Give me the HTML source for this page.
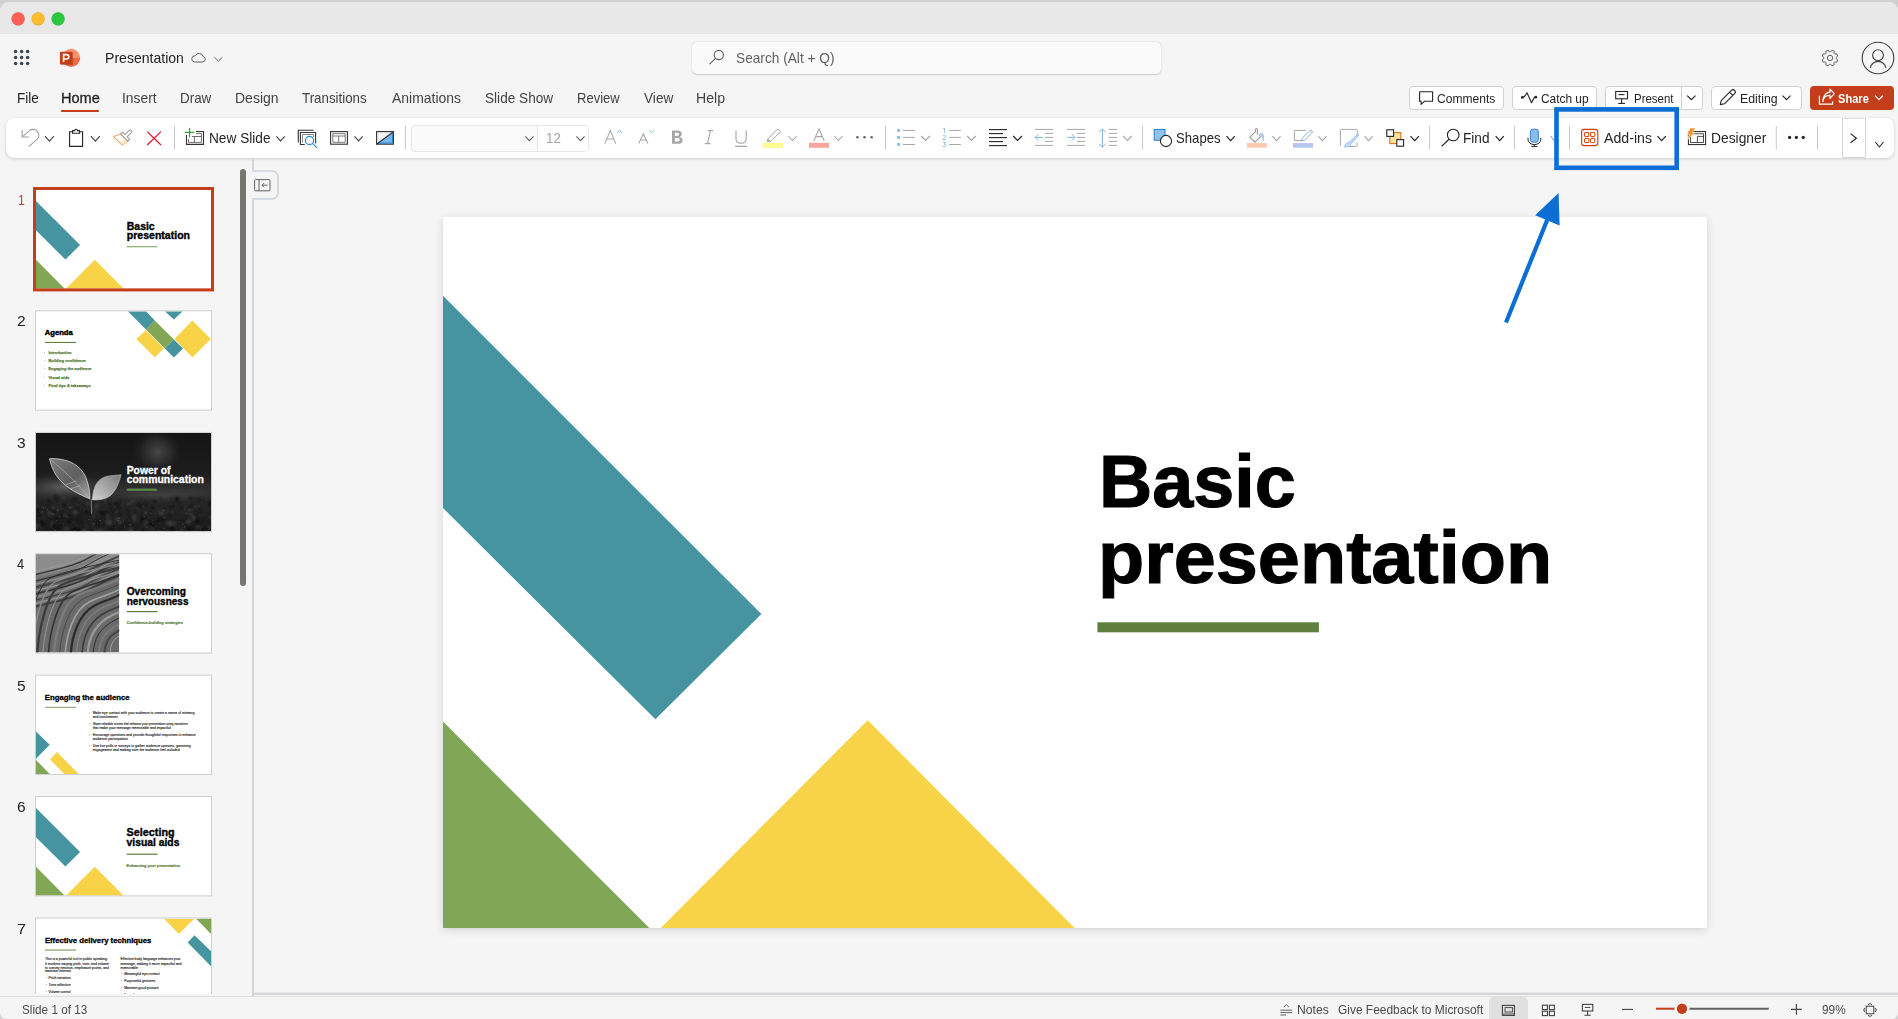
<!DOCTYPE html><html><head><meta charset="utf-8"><title>PowerPoint</title><style>

html,body{margin:0;padding:0}
body{width:1898px;height:1019px;overflow:hidden;background:#d0d0d0;position:relative;font-family:"Liberation Sans",sans-serif}
.a{position:absolute;box-sizing:border-box}
.t{position:absolute;white-space:nowrap;line-height:1;transform-origin:0 0;font-family:"Liberation Sans",sans-serif;z-index:5}
svg.ov{position:absolute;left:0;top:0;z-index:3;overflow:visible}

</style></head><body>

<div class="a" style="left:0;top:2px;width:1898px;height:1017px;background:#f5f5f5;border-radius:9px 9px 6px 6px;overflow:hidden"></div>
<div class="a" style="left:0;top:2px;width:1898px;height:32px;background:#e8e8e8;border-radius:9px 9px 0 0"></div>
<div class="a" style="left:692px;top:42px;width:469px;height:32px;background:#fafafa;border-radius:5px;box-shadow:0 0.5px 1.5px rgba(0,0,0,0.18)"></div>
<div class="a" style="left:1409px;top:86px;width:95px;height:24px;background:#fff;border:1px solid #d1d1d1;border-radius:4px"></div>
<div class="a" style="left:1512px;top:86px;width:85px;height:24px;background:#fff;border:1px solid #d1d1d1;border-radius:4px"></div>
<div class="a" style="left:1605px;top:86px;width:98px;height:24px;background:#fff;border:1px solid #d1d1d1;border-radius:4px"></div>
<div class="a" style="left:1681px;top:86px;width:1px;height:24px;background:#d1d1d1"></div>
<div class="a" style="left:1711px;top:86px;width:91px;height:24px;background:#fff;border:1px solid #d1d1d1;border-radius:4px"></div>
<div class="a" style="left:1810px;top:86px;width:84px;height:24px;background:#c43e1c;border-radius:4px"></div>
<div class="a" style="left:6px;top:118px;width:1888px;height:40px;background:#fff;border-radius:8px;box-shadow:0 1px 3px rgba(0,0,0,0.17),0 0 1px rgba(0,0,0,0.06)"></div>
<div class="a" style="left:410.5px;top:124.5px;width:178px;height:27px;background:#fafafa;border:1px solid #e6e6e6;border-radius:4px"></div>
<div class="a" style="left:537px;top:125.5px;width:51px;height:25px;background:#fff;border-left:1px solid #e6e6e6;border-radius:0 3px 3px 0"></div>
<div class="a" style="left:1842px;top:118px;width:24px;height:40px;background:#fff;border:1px solid #d6d6d6;border-top:1px solid #e0e0e0"></div>
<div class="a" style="left:443px;top:217px;width:1264px;height:711px;background:#fff;box-shadow:0 2px 8px rgba(0,0,0,0.14)"></div>
<div class="a" style="left:252px;top:158px;width:2px;height:838px;background:#d2d5d9"></div>
<div class="a" style="left:252px;top:170px;width:27px;height:30px;background:#f5f5f5;border:2px solid #d6d9de;border-left:none;border-radius:0 7px 7px 0"></div>
<div class="a" style="left:240px;top:169px;width:6px;height:417px;background:#777673;border-radius:3px"></div>
<div class="a" style="left:254px;top:992px;width:1644px;height:1px;background:#ebe9e6"></div><div class="a" style="left:252px;top:993px;width:1646px;height:2px;background:#d2d5d9"></div>
<div class="a" style="left:0;top:996px;width:1898px;height:1.2px;background:#e0dedb"></div>
<div class="a" style="left:1488.5px;top:997px;width:39.5px;height:26px;background:#e0e0e0;border-radius:5px"></div>

<svg class="ov" width="1898" height="1019" viewBox="0 0 1898 1019">
<g transform="translate(443,217)"><polygon points="0.00,78.80 318.40,397.10 212.40,502.30 0.00,291.00" fill="#4594a0"/>
<polygon points="0.00,504.60 206.30,711.00 0.00,711.00" fill="#80a656"/>
<polygon points="424.70,503.20 631.60,711.00 217.80,711.00" fill="#f8d347"/><rect x="654.4" y="405.3" width="221.5" height="10" fill="#5f7f3f"/></g>
<defs><clipPath id="tclip"><rect x="0" y="0" width="175" height="98.4"/></clipPath><clipPath id="t7clip"><rect x="0" y="0" width="175" height="75.3"/></clipPath><clipPath id="woodclip"><rect x="0" y="0" width="83.2" height="98.4"/></clipPath><radialGradient id="glow" cx="0.5" cy="0.5" r="0.5"><stop offset="0" stop-color="#484848"/><stop offset="0.5" stop-color="#333" stop-opacity="0.7"/><stop offset="1" stop-color="#1c1c1c" stop-opacity="0"/></radialGradient><linearGradient id="photo3" x1="0" y1="0" x2="0" y2="1"><stop offset="0" stop-color="#141414"/><stop offset="0.4" stop-color="#1c1c1c"/><stop offset="0.58" stop-color="#303030"/><stop offset="0.7" stop-color="#262626"/><stop offset="1" stop-color="#1e1e1e"/></linearGradient><radialGradient id="mist" cx="0.5" cy="0.5" r="0.5"><stop offset="0" stop-color="#707070" stop-opacity="0.75"/><stop offset="1" stop-color="#3a3a3a" stop-opacity="0"/></radialGradient><linearGradient id="leafA" x1="0" y1="0" x2="1" y2="1"><stop offset="0" stop-color="#7c7c7c"/><stop offset="0.55" stop-color="#5e5e5e"/><stop offset="1" stop-color="#a8a8a8"/></linearGradient><linearGradient id="leafB" x1="0" y1="1" x2="1" y2="0"><stop offset="0" stop-color="#d0d0d0"/><stop offset="0.5" stop-color="#a6a6a6"/><stop offset="1" stop-color="#7a7a7a"/></linearGradient><filter id="blur1" x="-20%" y="-20%" width="140%" height="140%"><feGaussianBlur stdDeviation="0.9"/></filter><filter id="blur2" x="-20%" y="-20%" width="140%" height="140%"><feGaussianBlur stdDeviation="0.55"/></filter><filter id="blur3" x="-50%" y="-50%" width="200%" height="200%"><feGaussianBlur stdDeviation="3"/></filter></defs>
<rect x="36" y="190.0" width="175" height="98.40" fill="#fff"/>
<rect x="36" y="311.3" width="175" height="98.40" fill="#fff"/>
<rect x="36" y="432.9" width="175" height="98.40" fill="#fff"/>
<rect x="36" y="554.2" width="175" height="98.40" fill="#fff"/>
<rect x="36" y="675.6" width="175" height="98.40" fill="#fff"/>
<rect x="36" y="797.0" width="175" height="98.40" fill="#fff"/>
<rect x="36" y="918.5" width="175" height="75.30" fill="#fff"/>
<g transform="translate(36,190.0) scale(0.138449)"><polygon points="0.00,78.80 318.40,397.10 212.40,502.30 0.00,291.00" fill="#4594a0"/>
<polygon points="0.00,504.60 206.30,711.00 0.00,711.00" fill="#80a656"/>
<polygon points="424.70,503.20 631.60,711.00 217.80,711.00" fill="#f8d347"/></g>
<g transform="translate(36,190.0)"><text x="90.8" y="39.7" font-family="Liberation Sans" font-weight="700" font-size="10.6" fill="#000" stroke="#000" stroke-width="0.35" textLength="27.9" lengthAdjust="spacingAndGlyphs">Basic</text><text x="90.8" y="49.4" font-family="Liberation Sans" font-weight="700" font-size="10.6" fill="#000" stroke="#000" stroke-width="0.35" textLength="63.2" lengthAdjust="spacingAndGlyphs">presentation</text><rect x="90.6" y="56.1" width="30.7" height="1.2" fill="#8fa874"/></g>
<g transform="translate(36,311.3)" clip-path="url(#tclip)"><polygon points="100.30,27.70 110.00,19.00 127.80,36.90 118.90,46.30" fill="#f8d347"/><polygon points="156.40,9.10 174.90,27.70 156.40,46.30 138.50,27.70" fill="#f8d347"/><polygon points="91.80,0.00 110.00,0.00 118.80,9.20 110.00,18.20" fill="#4594a0"/><polygon points="128.80,0.00 146.70,0.00 137.90,8.30" fill="#4594a0"/><polygon points="118.80,9.20 137.90,28.10 128.80,37.20 110.00,18.20" fill="#80a656"/><polygon points="137.90,28.10 147.00,37.20 137.90,46.30 128.80,37.20" fill="#4594a0"/><text x="8.8" y="24.0" font-family="Liberation Sans" font-weight="700" font-size="7.2" fill="#000" stroke="#000" stroke-width="0.4" textLength="27.9" lengthAdjust="spacingAndGlyphs">Agenda</text><rect x="9" y="30.6" width="31" height="1.1" fill="#5f7f3f"/><circle cx="8.4" cy="41.2" r="0.45" fill="#5f7f3f"/><text x="12.5" y="42.800000000000004" font-family="Liberation Sans" font-weight="700" font-size="4.4" fill="#5f7f3f" stroke="#5f7f3f" stroke-width="0.25" textLength="23" lengthAdjust="spacingAndGlyphs">Introduction</text><circle cx="8.4" cy="49.3" r="0.45" fill="#5f7f3f"/><text x="12.5" y="50.9" font-family="Liberation Sans" font-weight="700" font-size="4.4" fill="#5f7f3f" stroke="#5f7f3f" stroke-width="0.25" textLength="37.3" lengthAdjust="spacingAndGlyphs">Building confidence</text><circle cx="8.4" cy="57.3" r="0.45" fill="#5f7f3f"/><text x="12.5" y="58.9" font-family="Liberation Sans" font-weight="700" font-size="4.4" fill="#5f7f3f" stroke="#5f7f3f" stroke-width="0.25" textLength="43" lengthAdjust="spacingAndGlyphs">Engaging the audience</text><circle cx="8.4" cy="66.3" r="0.45" fill="#5f7f3f"/><text x="12.5" y="67.89999999999999" font-family="Liberation Sans" font-weight="700" font-size="4.4" fill="#5f7f3f" stroke="#5f7f3f" stroke-width="0.25" textLength="20.8" lengthAdjust="spacingAndGlyphs">Visual aids</text><circle cx="8.4" cy="74.3" r="0.45" fill="#5f7f3f"/><text x="12.5" y="75.89999999999999" font-family="Liberation Sans" font-weight="700" font-size="4.4" fill="#5f7f3f" stroke="#5f7f3f" stroke-width="0.25" textLength="42.1" lengthAdjust="spacingAndGlyphs">Final tips &amp; takeaways</text></g>
<g transform="translate(36,432.9)" clip-path="url(#tclip)"><rect x="0" y="0" width="175" height="98.4" fill="url(#photo3)"/><ellipse cx="121.6" cy="19" rx="26" ry="24" fill="url(#glow)"/><ellipse cx="28" cy="54" rx="48" ry="13" fill="url(#mist)"/><ellipse cx="125" cy="62" rx="75" ry="9" fill="url(#mist)" opacity="0.45"/><g filter="url(#blur1)" opacity="0.9"><circle cx="109.7" cy="90.7" r="2.58" fill="#3e3e3e"/><circle cx="130.9" cy="97.2" r="1.19" fill="#262626"/><circle cx="137.4" cy="73.0" r="0.84" fill="#141414"/><circle cx="17.5" cy="80.9" r="1.29" fill="#303030"/><circle cx="15.5" cy="73.0" r="1.82" fill="#262626"/><circle cx="47.6" cy="97.0" r="2.75" fill="#141414"/><circle cx="134.9" cy="66.6" r="1.45" fill="#262626"/><circle cx="19.9" cy="64.1" r="1.67" fill="#141414"/><circle cx="137.0" cy="98.6" r="1.51" fill="#141414"/><circle cx="49.4" cy="98.6" r="2.32" fill="#1f1f1f"/><circle cx="110.3" cy="70.5" r="2.06" fill="#141414"/><circle cx="171.9" cy="96.2" r="1.74" fill="#1a1a1a"/><circle cx="72.1" cy="97.7" r="1.70" fill="#1a1a1a"/><circle cx="51.5" cy="85.7" r="0.96" fill="#1f1f1f"/><circle cx="125.1" cy="66.4" r="1.11" fill="#1a1a1a"/><circle cx="84.0" cy="75.4" r="1.53" fill="#1f1f1f"/><circle cx="28.9" cy="73.2" r="2.13" fill="#1f1f1f"/><circle cx="61.7" cy="78.6" r="1.73" fill="#262626"/><circle cx="63.3" cy="84.8" r="0.96" fill="#0e0e0e"/><circle cx="125.1" cy="86.5" r="2.71" fill="#0e0e0e"/><circle cx="133.8" cy="97.5" r="3.15" fill="#1a1a1a"/><circle cx="89.8" cy="96.1" r="1.64" fill="#262626"/><circle cx="16.6" cy="90.9" r="2.59" fill="#3e3e3e"/><circle cx="50.6" cy="79.6" r="2.46" fill="#141414"/><circle cx="58.7" cy="86.0" r="2.62" fill="#1a1a1a"/><circle cx="46.9" cy="89.3" r="1.18" fill="#1f1f1f"/><circle cx="54.3" cy="70.4" r="0.83" fill="#141414"/><circle cx="127.5" cy="75.1" r="1.53" fill="#1f1f1f"/><circle cx="5.8" cy="99.5" r="2.33" fill="#262626"/><circle cx="2.8" cy="90.7" r="1.70" fill="#1a1a1a"/><circle cx="79.5" cy="79.2" r="0.95" fill="#1f1f1f"/><circle cx="2.9" cy="81.8" r="2.32" fill="#141414"/><circle cx="174.6" cy="84.3" r="1.17" fill="#3e3e3e"/><circle cx="71.9" cy="70.1" r="1.23" fill="#0e0e0e"/><circle cx="149.9" cy="74.6" r="1.46" fill="#303030"/><circle cx="151.3" cy="99.1" r="2.15" fill="#262626"/><circle cx="121.7" cy="75.4" r="1.22" fill="#262626"/><circle cx="70.1" cy="69.3" r="1.21" fill="#303030"/><circle cx="170.7" cy="86.6" r="1.88" fill="#1a1a1a"/><circle cx="29.6" cy="81.7" r="1.77" fill="#303030"/><circle cx="154.0" cy="77.0" r="2.05" fill="#3e3e3e"/><circle cx="61.4" cy="85.1" r="1.01" fill="#1a1a1a"/><circle cx="62.8" cy="89.4" r="1.55" fill="#262626"/><circle cx="44.9" cy="99.3" r="2.73" fill="#1a1a1a"/><circle cx="114.6" cy="84.9" r="0.96" fill="#303030"/><circle cx="137.0" cy="75.7" r="1.22" fill="#1a1a1a"/><circle cx="144.8" cy="87.3" r="2.46" fill="#1a1a1a"/><circle cx="46.6" cy="76.4" r="2.26" fill="#262626"/><circle cx="60.4" cy="94.3" r="2.87" fill="#1f1f1f"/><circle cx="78.4" cy="77.1" r="1.35" fill="#141414"/><circle cx="92.8" cy="70.0" r="1.86" fill="#3e3e3e"/><circle cx="83.4" cy="88.9" r="2.37" fill="#1f1f1f"/><circle cx="72.4" cy="86.2" r="2.67" fill="#303030"/><circle cx="117.5" cy="79.1" r="1.87" fill="#3e3e3e"/><circle cx="154.0" cy="73.7" r="2.24" fill="#141414"/><circle cx="26.0" cy="79.9" r="1.93" fill="#141414"/><circle cx="134.4" cy="70.5" r="1.71" fill="#262626"/><circle cx="174.3" cy="70.0" r="1.93" fill="#0e0e0e"/><circle cx="54.4" cy="70.5" r="0.99" fill="#0e0e0e"/><circle cx="72.2" cy="76.6" r="1.85" fill="#0e0e0e"/><circle cx="103.8" cy="72.6" r="2.05" fill="#0e0e0e"/><circle cx="60.4" cy="98.3" r="2.99" fill="#3e3e3e"/><circle cx="17.8" cy="93.9" r="1.84" fill="#0e0e0e"/><circle cx="96.5" cy="74.8" r="1.23" fill="#303030"/><circle cx="58.4" cy="84.9" r="2.65" fill="#3e3e3e"/><circle cx="20.4" cy="78.7" r="1.76" fill="#303030"/><circle cx="63.9" cy="69.1" r="1.50" fill="#303030"/><circle cx="83.3" cy="71.2" r="0.92" fill="#0e0e0e"/><circle cx="60.6" cy="96.2" r="1.11" fill="#0e0e0e"/><circle cx="56.0" cy="97.0" r="2.27" fill="#1a1a1a"/><circle cx="110.9" cy="96.1" r="1.90" fill="#262626"/><circle cx="173.8" cy="81.8" r="1.71" fill="#1f1f1f"/><circle cx="65.7" cy="98.6" r="3.13" fill="#303030"/><circle cx="104.5" cy="90.7" r="1.62" fill="#1a1a1a"/><circle cx="72.2" cy="75.5" r="2.29" fill="#262626"/><circle cx="165.2" cy="69.2" r="0.74" fill="#1f1f1f"/><circle cx="109.5" cy="80.0" r="1.35" fill="#3e3e3e"/><circle cx="21.7" cy="78.1" r="1.61" fill="#303030"/><circle cx="46.6" cy="97.7" r="2.81" fill="#141414"/><circle cx="85.7" cy="94.4" r="2.57" fill="#1a1a1a"/><circle cx="50.1" cy="85.9" r="1.82" fill="#1f1f1f"/><circle cx="153.3" cy="95.7" r="2.97" fill="#0e0e0e"/><circle cx="134.6" cy="74.8" r="1.59" fill="#1a1a1a"/><circle cx="108.1" cy="90.3" r="1.08" fill="#1a1a1a"/><circle cx="62.3" cy="90.8" r="2.18" fill="#0e0e0e"/><circle cx="-2.5" cy="83.9" r="2.13" fill="#0e0e0e"/><circle cx="157.7" cy="83.6" r="0.95" fill="#3e3e3e"/><circle cx="143.2" cy="85.4" r="2.19" fill="#1f1f1f"/><circle cx="114.4" cy="94.9" r="2.83" fill="#262626"/><circle cx="67.9" cy="94.7" r="1.49" fill="#1a1a1a"/><circle cx="81.2" cy="91.3" r="1.64" fill="#0e0e0e"/><circle cx="122.7" cy="79.6" r="1.33" fill="#3e3e3e"/><circle cx="82.5" cy="75.2" r="1.05" fill="#1f1f1f"/><circle cx="96.4" cy="81.9" r="1.46" fill="#141414"/><circle cx="74.0" cy="83.5" r="1.01" fill="#1f1f1f"/><circle cx="38.6" cy="93.5" r="2.68" fill="#1f1f1f"/><circle cx="167.5" cy="76.0" r="1.47" fill="#0e0e0e"/><circle cx="177.7" cy="89.2" r="1.10" fill="#3e3e3e"/><circle cx="19.1" cy="86.1" r="2.46" fill="#0e0e0e"/><circle cx="126.0" cy="68.8" r="1.09" fill="#262626"/><circle cx="24.1" cy="86.0" r="1.71" fill="#141414"/><circle cx="9.2" cy="71.7" r="1.53" fill="#1f1f1f"/><circle cx="65.6" cy="66.6" r="0.74" fill="#303030"/><circle cx="18.4" cy="78.3" r="1.84" fill="#0e0e0e"/><circle cx="75.1" cy="75.3" r="1.71" fill="#262626"/><circle cx="61.0" cy="87.6" r="2.69" fill="#141414"/><circle cx="123.2" cy="69.4" r="1.56" fill="#303030"/><circle cx="49.5" cy="97.9" r="2.32" fill="#141414"/><circle cx="44.6" cy="83.9" r="1.37" fill="#3e3e3e"/><circle cx="48.3" cy="99.1" r="2.92" fill="#3e3e3e"/><circle cx="64.2" cy="90.5" r="1.38" fill="#1f1f1f"/><circle cx="0.4" cy="76.3" r="1.70" fill="#0e0e0e"/><circle cx="13.5" cy="68.5" r="1.48" fill="#141414"/><circle cx="67.6" cy="80.7" r="2.48" fill="#0e0e0e"/><circle cx="141.2" cy="65.1" r="1.53" fill="#0e0e0e"/><circle cx="150.5" cy="98.0" r="2.06" fill="#3e3e3e"/><circle cx="37.4" cy="68.2" r="1.97" fill="#1f1f1f"/><circle cx="86.0" cy="71.6" r="1.73" fill="#262626"/><circle cx="61.1" cy="72.5" r="1.23" fill="#303030"/><circle cx="124.7" cy="92.7" r="1.82" fill="#1f1f1f"/><circle cx="147.4" cy="87.3" r="2.47" fill="#262626"/><circle cx="171.0" cy="77.0" r="0.88" fill="#303030"/><circle cx="35.9" cy="70.5" r="0.81" fill="#0e0e0e"/><circle cx="3.0" cy="71.3" r="0.79" fill="#262626"/><circle cx="116.7" cy="76.5" r="1.48" fill="#1a1a1a"/><circle cx="158.0" cy="86.3" r="1.75" fill="#262626"/><circle cx="80.6" cy="70.9" r="1.64" fill="#0e0e0e"/><circle cx="64.8" cy="77.9" r="2.23" fill="#141414"/><circle cx="96.9" cy="68.0" r="1.76" fill="#3e3e3e"/><circle cx="49.0" cy="72.5" r="1.45" fill="#0e0e0e"/><circle cx="59.3" cy="91.1" r="1.65" fill="#0e0e0e"/><circle cx="121.5" cy="88.3" r="1.88" fill="#141414"/><circle cx="18.3" cy="88.1" r="1.54" fill="#1f1f1f"/><circle cx="40.4" cy="99.8" r="1.24" fill="#1f1f1f"/><circle cx="1.5" cy="72.3" r="0.87" fill="#262626"/><circle cx="162.0" cy="89.4" r="2.31" fill="#141414"/><circle cx="81.7" cy="74.2" r="1.87" fill="#1f1f1f"/><circle cx="81.7" cy="91.9" r="1.40" fill="#141414"/><circle cx="167.2" cy="87.3" r="1.77" fill="#1a1a1a"/><circle cx="-1.9" cy="66.2" r="1.64" fill="#262626"/><circle cx="27.7" cy="65.2" r="1.67" fill="#3e3e3e"/><circle cx="90.9" cy="76.6" r="0.96" fill="#0e0e0e"/><circle cx="39.9" cy="92.9" r="1.25" fill="#262626"/><circle cx="6.7" cy="72.8" r="0.83" fill="#262626"/><circle cx="138.5" cy="65.7" r="1.69" fill="#262626"/><circle cx="52.4" cy="65.8" r="0.70" fill="#141414"/><circle cx="29.5" cy="82.3" r="1.59" fill="#303030"/><circle cx="39.3" cy="97.4" r="2.82" fill="#0e0e0e"/><circle cx="95.1" cy="97.2" r="2.40" fill="#3e3e3e"/><circle cx="129.2" cy="86.5" r="1.77" fill="#1a1a1a"/><circle cx="85.1" cy="84.6" r="1.61" fill="#1f1f1f"/><circle cx="21.0" cy="64.4" r="1.55" fill="#1f1f1f"/><circle cx="78.3" cy="93.8" r="1.53" fill="#0e0e0e"/><circle cx="22.1" cy="81.4" r="2.20" fill="#1a1a1a"/><circle cx="145.3" cy="75.3" r="0.99" fill="#0e0e0e"/><circle cx="82.4" cy="89.1" r="2.53" fill="#303030"/><circle cx="117.6" cy="73.9" r="1.50" fill="#141414"/><circle cx="5.7" cy="71.2" r="1.14" fill="#1a1a1a"/><circle cx="157.3" cy="66.6" r="1.64" fill="#262626"/><circle cx="133.2" cy="84.0" r="2.50" fill="#1f1f1f"/><circle cx="167.2" cy="68.7" r="0.74" fill="#141414"/><circle cx="144.8" cy="87.6" r="2.76" fill="#1f1f1f"/><circle cx="5.5" cy="79.4" r="1.03" fill="#3e3e3e"/><circle cx="66.2" cy="68.7" r="0.79" fill="#141414"/><circle cx="21.9" cy="81.9" r="1.45" fill="#0e0e0e"/><circle cx="8.5" cy="91.5" r="2.14" fill="#0e0e0e"/><circle cx="19.0" cy="98.9" r="2.95" fill="#262626"/><circle cx="152.6" cy="98.2" r="2.46" fill="#141414"/><circle cx="92.5" cy="68.5" r="0.96" fill="#1a1a1a"/><circle cx="-0.7" cy="85.0" r="2.42" fill="#1f1f1f"/><circle cx="174.9" cy="73.7" r="1.66" fill="#1f1f1f"/><circle cx="125.4" cy="80.1" r="2.41" fill="#3e3e3e"/><circle cx="74.7" cy="76.0" r="1.49" fill="#141414"/><circle cx="80.4" cy="79.6" r="1.59" fill="#3e3e3e"/><circle cx="117.9" cy="69.8" r="1.36" fill="#262626"/><circle cx="104.9" cy="67.7" r="1.74" fill="#262626"/><circle cx="121.1" cy="71.5" r="0.74" fill="#303030"/><circle cx="39.7" cy="89.4" r="1.69" fill="#262626"/><circle cx="36.0" cy="74.0" r="1.08" fill="#303030"/><circle cx="90.4" cy="91.5" r="2.59" fill="#1a1a1a"/><circle cx="60.7" cy="72.9" r="2.18" fill="#3e3e3e"/><circle cx="161.4" cy="66.2" r="1.28" fill="#1a1a1a"/><circle cx="22.9" cy="93.9" r="2.08" fill="#0e0e0e"/><circle cx="14.0" cy="78.3" r="2.05" fill="#1a1a1a"/><circle cx="159.9" cy="71.2" r="1.85" fill="#1a1a1a"/><circle cx="83.4" cy="80.9" r="1.78" fill="#0e0e0e"/><circle cx="141.9" cy="77.6" r="0.85" fill="#303030"/><circle cx="106.6" cy="86.4" r="2.45" fill="#0e0e0e"/><circle cx="54.4" cy="65.0" r="1.02" fill="#262626"/><circle cx="87.7" cy="83.6" r="2.13" fill="#262626"/><circle cx="174.8" cy="93.4" r="2.94" fill="#1f1f1f"/><circle cx="97.9" cy="66.2" r="0.85" fill="#262626"/><circle cx="62.7" cy="85.4" r="2.17" fill="#303030"/><circle cx="34.4" cy="74.3" r="0.83" fill="#3e3e3e"/><circle cx="61.4" cy="84.9" r="2.30" fill="#1f1f1f"/><circle cx="71.8" cy="98.9" r="1.18" fill="#1f1f1f"/><circle cx="39.4" cy="65.4" r="0.76" fill="#1a1a1a"/><circle cx="159.4" cy="88.8" r="2.59" fill="#1f1f1f"/><circle cx="106.6" cy="84.2" r="1.79" fill="#0e0e0e"/><circle cx="159.2" cy="72.6" r="2.16" fill="#303030"/><circle cx="73.7" cy="98.9" r="2.62" fill="#262626"/><circle cx="29.2" cy="87.5" r="2.65" fill="#1f1f1f"/><circle cx="108.0" cy="77.9" r="1.01" fill="#1f1f1f"/><circle cx="158.0" cy="88.8" r="2.86" fill="#141414"/><circle cx="157.5" cy="71.7" r="1.17" fill="#1a1a1a"/><circle cx="141.3" cy="66.8" r="1.88" fill="#0e0e0e"/><circle cx="111.5" cy="91.6" r="1.49" fill="#0e0e0e"/><circle cx="100.2" cy="86.6" r="2.14" fill="#303030"/><circle cx="128.8" cy="79.0" r="1.54" fill="#303030"/><circle cx="104.9" cy="72.8" r="1.36" fill="#0e0e0e"/><circle cx="106.6" cy="98.8" r="1.56" fill="#0e0e0e"/><circle cx="24.0" cy="74.6" r="1.62" fill="#303030"/><circle cx="30.3" cy="70.9" r="1.56" fill="#1f1f1f"/><circle cx="139.4" cy="75.9" r="0.92" fill="#262626"/><circle cx="21.9" cy="82.7" r="1.04" fill="#141414"/><circle cx="150.9" cy="87.2" r="2.69" fill="#141414"/><circle cx="158.7" cy="86.2" r="2.41" fill="#3e3e3e"/><circle cx="15.2" cy="71.0" r="0.95" fill="#0e0e0e"/><circle cx="57.8" cy="77.2" r="2.02" fill="#303030"/><circle cx="134.2" cy="90.5" r="2.61" fill="#3e3e3e"/><circle cx="30.1" cy="96.2" r="2.27" fill="#303030"/><circle cx="110.1" cy="98.7" r="1.38" fill="#0e0e0e"/><circle cx="144.4" cy="71.0" r="1.19" fill="#141414"/><circle cx="80.0" cy="88.5" r="2.40" fill="#0e0e0e"/><circle cx="41.5" cy="97.9" r="2.14" fill="#0e0e0e"/><circle cx="18.3" cy="85.5" r="1.63" fill="#1f1f1f"/><circle cx="-2.4" cy="77.7" r="1.38" fill="#1f1f1f"/><circle cx="10.1" cy="91.4" r="2.46" fill="#1a1a1a"/><circle cx="-0.1" cy="93.1" r="3.08" fill="#3e3e3e"/><circle cx="130.5" cy="97.1" r="1.94" fill="#1a1a1a"/><circle cx="160.9" cy="87.1" r="2.39" fill="#0e0e0e"/><circle cx="101.2" cy="74.7" r="1.29" fill="#3e3e3e"/><circle cx="8.4" cy="79.6" r="1.22" fill="#141414"/><circle cx="46.1" cy="89.9" r="1.30" fill="#0e0e0e"/><circle cx="97.2" cy="79.6" r="1.16" fill="#3e3e3e"/><circle cx="66.9" cy="97.6" r="1.33" fill="#1a1a1a"/><circle cx="20.4" cy="67.0" r="1.72" fill="#141414"/><circle cx="62.3" cy="64.6" r="0.94" fill="#262626"/><circle cx="170.2" cy="95.3" r="1.26" fill="#141414"/><circle cx="32.1" cy="92.9" r="1.09" fill="#303030"/><circle cx="12.4" cy="74.0" r="2.19" fill="#1f1f1f"/><circle cx="82.1" cy="64.8" r="0.84" fill="#3e3e3e"/><circle cx="137.9" cy="79.6" r="1.83" fill="#1f1f1f"/><circle cx="113.8" cy="86.9" r="1.04" fill="#0e0e0e"/><circle cx="73.3" cy="90.0" r="2.59" fill="#3e3e3e"/><circle cx="146.4" cy="97.0" r="1.93" fill="#3e3e3e"/><circle cx="133.9" cy="96.1" r="1.42" fill="#3e3e3e"/><circle cx="31.5" cy="94.0" r="1.24" fill="#1a1a1a"/><circle cx="36.2" cy="79.2" r="1.30" fill="#262626"/><circle cx="62.8" cy="64.1" r="1.39" fill="#3e3e3e"/><circle cx="27.6" cy="80.5" r="1.00" fill="#262626"/><circle cx="3.5" cy="78.7" r="1.09" fill="#1f1f1f"/><circle cx="0.3" cy="93.8" r="3.03" fill="#303030"/><circle cx="79.9" cy="80.9" r="1.01" fill="#1a1a1a"/><circle cx="166.7" cy="65.1" r="0.87" fill="#262626"/><circle cx="12.5" cy="68.7" r="1.57" fill="#1a1a1a"/><circle cx="137.3" cy="69.5" r="1.41" fill="#1f1f1f"/><circle cx="97.9" cy="74.2" r="0.94" fill="#262626"/><circle cx="64.9" cy="77.3" r="1.58" fill="#303030"/><circle cx="77.2" cy="95.3" r="3.11" fill="#141414"/><circle cx="44.6" cy="83.6" r="2.20" fill="#141414"/><circle cx="40.0" cy="87.9" r="1.09" fill="#0e0e0e"/><circle cx="136.6" cy="79.1" r="1.67" fill="#303030"/><circle cx="39.7" cy="75.0" r="2.00" fill="#141414"/><circle cx="3.9" cy="77.9" r="1.39" fill="#0e0e0e"/><circle cx="98.0" cy="79.8" r="1.04" fill="#0e0e0e"/><circle cx="164.4" cy="77.3" r="1.66" fill="#1f1f1f"/><circle cx="102.5" cy="85.4" r="1.65" fill="#262626"/><circle cx="51.6" cy="70.0" r="1.99" fill="#0e0e0e"/><circle cx="113.7" cy="66.0" r="0.92" fill="#303030"/><circle cx="67.4" cy="97.3" r="1.77" fill="#303030"/><circle cx="64.5" cy="78.7" r="1.58" fill="#0e0e0e"/><circle cx="86.5" cy="84.4" r="1.30" fill="#262626"/><circle cx="4.6" cy="90.7" r="1.26" fill="#141414"/><circle cx="64.7" cy="76.3" r="2.07" fill="#262626"/><circle cx="138.8" cy="90.7" r="1.54" fill="#3e3e3e"/><circle cx="1.5" cy="73.1" r="1.01" fill="#3e3e3e"/><circle cx="41.5" cy="73.5" r="2.05" fill="#262626"/><circle cx="162.6" cy="94.1" r="2.29" fill="#303030"/><circle cx="6.4" cy="90.6" r="2.12" fill="#0e0e0e"/><circle cx="79.5" cy="89.0" r="2.16" fill="#1f1f1f"/><circle cx="154.7" cy="65.4" r="1.38" fill="#0e0e0e"/><circle cx="71.7" cy="83.1" r="1.68" fill="#303030"/><circle cx="37.1" cy="98.2" r="1.38" fill="#0e0e0e"/><circle cx="127.2" cy="85.3" r="1.03" fill="#1f1f1f"/><circle cx="80.3" cy="87.4" r="2.63" fill="#1f1f1f"/><circle cx="148.9" cy="98.4" r="2.62" fill="#1a1a1a"/><circle cx="18.8" cy="91.2" r="1.54" fill="#1a1a1a"/><circle cx="51.1" cy="95.6" r="1.78" fill="#1f1f1f"/><circle cx="160.3" cy="80.8" r="1.14" fill="#141414"/><circle cx="167.8" cy="75.3" r="1.72" fill="#262626"/><circle cx="13.0" cy="76.7" r="0.94" fill="#262626"/><circle cx="76.2" cy="82.7" r="1.59" fill="#141414"/><circle cx="22.1" cy="81.7" r="2.06" fill="#262626"/><circle cx="166.3" cy="76.4" r="0.84" fill="#262626"/><circle cx="45.5" cy="81.8" r="1.80" fill="#141414"/><circle cx="97.5" cy="87.8" r="1.77" fill="#3e3e3e"/><circle cx="42.5" cy="75.3" r="1.73" fill="#141414"/><circle cx="43.9" cy="76.9" r="2.21" fill="#1a1a1a"/><circle cx="85.1" cy="89.5" r="1.18" fill="#3e3e3e"/><circle cx="18.1" cy="91.7" r="1.71" fill="#0e0e0e"/><circle cx="154.6" cy="74.2" r="1.90" fill="#141414"/><circle cx="6.0" cy="99.0" r="1.99" fill="#1f1f1f"/><circle cx="57.6" cy="91.6" r="1.24" fill="#3e3e3e"/><circle cx="56.6" cy="67.5" r="0.76" fill="#1f1f1f"/><circle cx="58.0" cy="100.0" r="2.07" fill="#0e0e0e"/><circle cx="51.6" cy="70.5" r="2.02" fill="#3e3e3e"/><circle cx="130.4" cy="98.5" r="2.03" fill="#262626"/><circle cx="72.3" cy="72.1" r="0.79" fill="#303030"/><circle cx="94.9" cy="87.5" r="2.25" fill="#1a1a1a"/><circle cx="165.9" cy="98.1" r="2.15" fill="#0e0e0e"/><circle cx="27.8" cy="72.9" r="1.65" fill="#0e0e0e"/><circle cx="12.2" cy="99.5" r="2.36" fill="#262626"/><circle cx="17.8" cy="75.0" r="1.48" fill="#3e3e3e"/><circle cx="74.4" cy="71.5" r="1.47" fill="#141414"/><circle cx="66.1" cy="86.8" r="2.66" fill="#1a1a1a"/><circle cx="156.5" cy="89.6" r="1.15" fill="#1a1a1a"/><circle cx="6.7" cy="97.8" r="2.14" fill="#262626"/><circle cx="97.1" cy="92.7" r="2.33" fill="#1a1a1a"/><circle cx="48.4" cy="90.8" r="1.53" fill="#262626"/><circle cx="70.1" cy="89.6" r="1.20" fill="#303030"/><circle cx="33.7" cy="89.0" r="2.39" fill="#0e0e0e"/><circle cx="77.6" cy="72.4" r="1.11" fill="#1f1f1f"/><circle cx="13.2" cy="80.1" r="1.89" fill="#3e3e3e"/><circle cx="119.5" cy="92.9" r="2.03" fill="#1a1a1a"/><circle cx="102.0" cy="73.1" r="1.28" fill="#0e0e0e"/><circle cx="95.2" cy="84.0" r="1.29" fill="#0e0e0e"/><circle cx="57.9" cy="85.3" r="2.10" fill="#262626"/><circle cx="155.4" cy="82.8" r="1.95" fill="#303030"/><circle cx="57.4" cy="95.6" r="1.38" fill="#262626"/><circle cx="50.3" cy="77.3" r="2.04" fill="#1a1a1a"/><circle cx="115.6" cy="91.3" r="2.47" fill="#0e0e0e"/><circle cx="85.2" cy="69.7" r="2.02" fill="#262626"/><circle cx="116.7" cy="79.1" r="2.21" fill="#1f1f1f"/><circle cx="80.4" cy="96.9" r="2.24" fill="#1a1a1a"/><circle cx="125.8" cy="86.1" r="2.41" fill="#141414"/><circle cx="101.4" cy="87.5" r="1.98" fill="#262626"/><circle cx="136.6" cy="94.1" r="1.17" fill="#303030"/><circle cx="-2.6" cy="99.0" r="2.76" fill="#141414"/><circle cx="173.4" cy="94.7" r="1.58" fill="#3e3e3e"/><circle cx="69.3" cy="67.7" r="1.23" fill="#3e3e3e"/><circle cx="38.5" cy="73.9" r="0.79" fill="#1f1f1f"/><circle cx="39.7" cy="66.4" r="1.84" fill="#1a1a1a"/><circle cx="75.7" cy="75.0" r="1.90" fill="#1a1a1a"/><circle cx="97.9" cy="83.8" r="2.34" fill="#3e3e3e"/><circle cx="121.2" cy="66.2" r="0.99" fill="#3e3e3e"/><circle cx="-2.5" cy="79.3" r="1.61" fill="#141414"/><circle cx="135.7" cy="67.8" r="1.28" fill="#262626"/><circle cx="159.7" cy="80.9" r="1.37" fill="#0e0e0e"/><circle cx="1.5" cy="92.6" r="2.60" fill="#303030"/><circle cx="81.2" cy="86.3" r="2.06" fill="#3e3e3e"/><circle cx="151.1" cy="71.4" r="1.65" fill="#262626"/><circle cx="176.1" cy="71.2" r="0.83" fill="#1a1a1a"/><circle cx="33.4" cy="83.2" r="2.46" fill="#141414"/><circle cx="36.9" cy="64.1" r="1.14" fill="#1a1a1a"/><circle cx="30.9" cy="95.4" r="1.91" fill="#3e3e3e"/><circle cx="169.6" cy="96.2" r="2.56" fill="#141414"/><circle cx="20.9" cy="96.4" r="1.43" fill="#0e0e0e"/><circle cx="46.6" cy="82.9" r="1.26" fill="#1f1f1f"/><circle cx="152.7" cy="88.6" r="2.44" fill="#3e3e3e"/><circle cx="39.1" cy="79.2" r="2.18" fill="#3e3e3e"/><circle cx="116.4" cy="87.7" r="2.63" fill="#1f1f1f"/><circle cx="130.1" cy="90.4" r="1.42" fill="#303030"/><circle cx="42.3" cy="88.5" r="2.45" fill="#141414"/><circle cx="145.6" cy="98.9" r="1.50" fill="#1f1f1f"/><circle cx="14.1" cy="85.8" r="1.61" fill="#141414"/><circle cx="110.5" cy="70.6" r="1.48" fill="#1f1f1f"/><circle cx="74.0" cy="67.8" r="0.69" fill="#303030"/><circle cx="81.5" cy="93.8" r="2.91" fill="#1f1f1f"/><circle cx="164.3" cy="66.9" r="0.86" fill="#0e0e0e"/><circle cx="175.9" cy="90.0" r="1.73" fill="#262626"/><circle cx="44.9" cy="84.6" r="2.51" fill="#1a1a1a"/><circle cx="107.1" cy="83.3" r="1.22" fill="#262626"/><circle cx="98.1" cy="99.2" r="1.19" fill="#262626"/><circle cx="50.3" cy="93.4" r="1.21" fill="#303030"/><circle cx="84.6" cy="67.0" r="1.51" fill="#1a1a1a"/><circle cx="14.1" cy="90.3" r="1.81" fill="#1a1a1a"/><circle cx="60.4" cy="91.7" r="1.13" fill="#1f1f1f"/><circle cx="119.7" cy="68.4" r="1.38" fill="#0e0e0e"/><circle cx="135.4" cy="95.4" r="2.52" fill="#0e0e0e"/></g><g opacity="0.7"><circle cx="7.1" cy="85.3" r="0.49" fill="#6a6a6a"/><circle cx="77.5" cy="75.9" r="0.41" fill="#6a6a6a"/><circle cx="78.7" cy="73.8" r="0.57" fill="#6a6a6a"/><circle cx="42.6" cy="79.5" r="0.34" fill="#6a6a6a"/><circle cx="53.0" cy="96.2" r="0.42" fill="#6a6a6a"/><circle cx="16.8" cy="81.0" r="0.68" fill="#6a6a6a"/><circle cx="15.4" cy="80.9" r="0.38" fill="#6a6a6a"/><circle cx="119.3" cy="84.0" r="0.34" fill="#6a6a6a"/><circle cx="150.9" cy="80.5" r="0.57" fill="#6a6a6a"/><circle cx="79.2" cy="94.7" r="0.32" fill="#6a6a6a"/><circle cx="39.9" cy="79.4" r="0.41" fill="#6a6a6a"/><circle cx="143.8" cy="85.1" r="0.44" fill="#6a6a6a"/><circle cx="88.7" cy="94.0" r="0.53" fill="#6a6a6a"/><circle cx="79.0" cy="89.1" r="0.55" fill="#6a6a6a"/><circle cx="71.0" cy="83.1" r="0.35" fill="#6a6a6a"/><circle cx="76.8" cy="94.9" r="0.42" fill="#6a6a6a"/><circle cx="63.9" cy="87.7" r="0.54" fill="#6a6a6a"/><circle cx="30.7" cy="83.6" r="0.59" fill="#6a6a6a"/><circle cx="7.2" cy="74.8" r="0.60" fill="#6a6a6a"/><circle cx="158.4" cy="73.8" r="0.33" fill="#6a6a6a"/><circle cx="109.7" cy="79.4" r="0.56" fill="#6a6a6a"/><circle cx="6.0" cy="83.9" r="0.36" fill="#6a6a6a"/><circle cx="58.1" cy="90.0" r="0.50" fill="#6a6a6a"/><circle cx="149.3" cy="93.9" r="0.55" fill="#6a6a6a"/><circle cx="148.3" cy="76.6" r="0.49" fill="#6a6a6a"/><circle cx="55.9" cy="88.2" r="0.34" fill="#6a6a6a"/><circle cx="154.9" cy="81.6" r="0.61" fill="#6a6a6a"/><circle cx="165.0" cy="96.4" r="0.46" fill="#6a6a6a"/><circle cx="150.0" cy="97.9" r="0.35" fill="#6a6a6a"/><circle cx="130.8" cy="90.9" r="0.48" fill="#6a6a6a"/><circle cx="48.6" cy="76.5" r="0.46" fill="#6a6a6a"/><circle cx="163.1" cy="82.5" r="0.40" fill="#6a6a6a"/><circle cx="108.4" cy="83.4" r="0.55" fill="#6a6a6a"/><circle cx="79.5" cy="79.4" r="0.31" fill="#6a6a6a"/><circle cx="143.2" cy="89.1" r="0.40" fill="#6a6a6a"/><circle cx="87.4" cy="87.1" r="0.50" fill="#6a6a6a"/><circle cx="157.7" cy="92.2" r="0.42" fill="#6a6a6a"/><circle cx="59.3" cy="87.9" r="0.36" fill="#6a6a6a"/><circle cx="163.5" cy="73.2" r="0.50" fill="#6a6a6a"/><circle cx="47.8" cy="85.7" r="0.32" fill="#6a6a6a"/><circle cx="39.2" cy="97.7" r="0.62" fill="#6a6a6a"/><circle cx="38.7" cy="83.9" r="0.31" fill="#6a6a6a"/><circle cx="21.4" cy="77.0" r="0.69" fill="#6a6a6a"/><circle cx="54.6" cy="78.4" r="0.33" fill="#6a6a6a"/><circle cx="19.2" cy="97.9" r="0.60" fill="#6a6a6a"/><circle cx="161.1" cy="93.7" r="0.61" fill="#6a6a6a"/><circle cx="44.6" cy="76.4" r="0.41" fill="#6a6a6a"/><circle cx="11.4" cy="76.6" r="0.59" fill="#6a6a6a"/><circle cx="85.9" cy="72.3" r="0.42" fill="#6a6a6a"/><circle cx="148.7" cy="94.1" r="0.59" fill="#6a6a6a"/><circle cx="128.0" cy="95.7" r="0.52" fill="#6a6a6a"/><circle cx="67.1" cy="86.9" r="0.41" fill="#6a6a6a"/><circle cx="6.4" cy="78.8" r="0.48" fill="#6a6a6a"/><circle cx="21.0" cy="74.1" r="0.40" fill="#6a6a6a"/><circle cx="64.4" cy="96.9" r="0.49" fill="#6a6a6a"/><circle cx="146.5" cy="91.4" r="0.54" fill="#6a6a6a"/><circle cx="56.4" cy="82.2" r="0.43" fill="#6a6a6a"/><circle cx="111.0" cy="94.2" r="0.62" fill="#6a6a6a"/><circle cx="51.7" cy="75.9" r="0.30" fill="#6a6a6a"/><circle cx="102.3" cy="77.9" r="0.30" fill="#6a6a6a"/><circle cx="52.9" cy="77.9" r="0.38" fill="#6a6a6a"/><circle cx="116.3" cy="87.2" r="0.41" fill="#6a6a6a"/><circle cx="127.9" cy="77.4" r="0.67" fill="#6a6a6a"/><circle cx="20.8" cy="87.4" r="0.58" fill="#6a6a6a"/><circle cx="128.2" cy="84.7" r="0.65" fill="#6a6a6a"/><circle cx="110.1" cy="90.0" r="0.33" fill="#6a6a6a"/><circle cx="32.7" cy="84.1" r="0.52" fill="#6a6a6a"/><circle cx="16.7" cy="91.3" r="0.44" fill="#6a6a6a"/><circle cx="83.2" cy="85.6" r="0.64" fill="#6a6a6a"/><circle cx="52.9" cy="86.6" r="0.54" fill="#6a6a6a"/><circle cx="114.7" cy="80.1" r="0.41" fill="#6a6a6a"/><circle cx="82.3" cy="87.6" r="0.56" fill="#6a6a6a"/><circle cx="23.4" cy="83.6" r="0.52" fill="#6a6a6a"/><circle cx="34.1" cy="74.7" r="0.67" fill="#6a6a6a"/><circle cx="3.6" cy="85.0" r="0.42" fill="#6a6a6a"/><circle cx="5.4" cy="79.0" r="0.36" fill="#6a6a6a"/><circle cx="70.0" cy="95.7" r="0.33" fill="#6a6a6a"/><circle cx="61.5" cy="90.1" r="0.55" fill="#6a6a6a"/><circle cx="3.6" cy="77.9" r="0.41" fill="#6a6a6a"/><circle cx="156.6" cy="83.5" r="0.40" fill="#6a6a6a"/><circle cx="84.0" cy="84.6" r="0.36" fill="#6a6a6a"/><circle cx="116.7" cy="90.7" r="0.49" fill="#6a6a6a"/><circle cx="94.0" cy="92.0" r="0.68" fill="#6a6a6a"/><circle cx="107.2" cy="73.2" r="0.50" fill="#6a6a6a"/><circle cx="115.9" cy="80.6" r="0.57" fill="#6a6a6a"/><circle cx="64.4" cy="88.0" r="0.55" fill="#6a6a6a"/><circle cx="117.3" cy="96.1" r="0.58" fill="#6a6a6a"/><circle cx="124.1" cy="90.3" r="0.39" fill="#6a6a6a"/><circle cx="107.5" cy="88.1" r="0.32" fill="#6a6a6a"/><circle cx="132.0" cy="77.9" r="0.50" fill="#6a6a6a"/></g><path d="M55,66 C55.6,71 55.4,76 55.8,81" fill="none" stroke="#7a7a7a" stroke-width="1.1"/><path d="M13.5,25.8 C28,25 44,30 50,45 C53,53 54,60 54,66 C44,62 30,55 22,45 C17,38 15,32 13.5,25.8 Z" fill="url(#leafA)" stroke="#d4d4d4" stroke-width="0.8"/><path d="M15,27 C30,40 44,52 53,65" fill="none" stroke="#c8c8c8" stroke-width="0.5"/><path d="M30,52 L40,48 M34,56 L44,53" stroke="#bdbdbd" stroke-width="0.6"/><path d="M56.2,67 C57,58 59,50 65,46 C71,42 78,43 85.1,41.8 C83,50 80,58 74,63 C68,67 62,67 56.2,67 Z" fill="url(#leafB)" stroke="#d0d0d0" stroke-width="0.5"/><text x="90.7" y="40.8" font-family="Liberation Sans" font-weight="700" font-size="10.6" fill="#fff" stroke="#fff" stroke-width="0.3" textLength="43.8" lengthAdjust="spacingAndGlyphs">Power of</text><text x="90.7" y="50.6" font-family="Liberation Sans" font-weight="700" font-size="10.6" fill="#fff" stroke="#fff" stroke-width="0.3" textLength="77.1" lengthAdjust="spacingAndGlyphs">communication</text><rect x="90.7" y="55.7" width="30.4" height="2.2" fill="#5a8a4a"/></g>
<g transform="translate(36,554.2)" clip-path="url(#woodclip)"><rect x="0" y="0" width="83.2" height="98.4" fill="#6a6a6a"/><g filter="url(#blur2)"><path d="M-2,-2 H86 V6 C60,12 30,18 -2,22 Z" fill="#8c8c8c"/><path d="M-3,18.0 C18,12.0 36,10.0 50,2.0 C62,-5.0 72,-10.0 88,-16.0" fill="none" stroke="#9a9a9a" stroke-width="1.0"/><path d="M-3,21.2 C18,15.2 36,13.2 50,5.2 C62,-1.8 72,-6.8 88,-12.8" fill="none" stroke="#3a3a3a" stroke-width="1.5"/><path d="M-3,24.4 C18,18.4 36,16.4 50,8.4 C62,1.4 72,-3.6 88,-9.6" fill="none" stroke="#7a7a7a" stroke-width="2.0"/><path d="M-3,27.6 C18,21.6 36,19.6 50,11.6 C62,4.6 72,-0.4 88,-6.4" fill="none" stroke="#2e2e2e" stroke-width="1.0"/><path d="M-3,30.8 C18,24.8 36,22.8 50,14.8 C62,7.8 72,2.8 88,-3.2" fill="none" stroke="#8e8e8e" stroke-width="1.5"/><path d="M-3,34.0 C18,28.0 36,26.0 50,18.0 C62,11.0 72,6.0 88,0.0" fill="none" stroke="#454545" stroke-width="2.0"/><path d="M-3,37.2 C18,31.2 36,29.2 50,21.2 C62,14.2 72,9.2 88,3.2" fill="none" stroke="#a0a0a0" stroke-width="1.0"/><path d="M-3,40.4 C18,34.4 36,32.4 50,24.4 C62,17.4 72,12.4 88,6.4" fill="none" stroke="#333" stroke-width="1.5"/><path d="M-3,43.6 C18,37.6 36,35.6 50,27.6 C62,20.6 72,15.6 88,9.6" fill="none" stroke="#858585" stroke-width="2.0"/><path d="M-3,46.8 C18,40.8 36,38.8 50,30.8 C62,23.8 72,18.8 88,12.8" fill="none" stroke="#3c3c3c" stroke-width="1.0"/><path d="M-3,50.0 C18,44.0 36,42.0 50,34.0 C62,27.0 72,22.0 88,16.0" fill="none" stroke="#909090" stroke-width="1.5"/><path d="M-3,53.2 C18,47.2 36,45.2 50,37.2 C62,30.2 72,25.2 88,19.2" fill="none" stroke="#404040" stroke-width="2.0"/><path d="M-10.0,100 C-9.0,82 -2.0,32.0 14.0,24.0 C28.0,17.0 46.0,14.0 92,4.0" fill="none" stroke="#2c2c2c" stroke-width="1.0"/><path d="M-4.4,100 C-3.4,82 3.6,35.4 19.6,27.4 C33.6,20.4 51.6,17.4 92,7.4" fill="none" stroke="#8a8a8a" stroke-width="1.6"/><path d="M1.2,100 C2.2,82 9.2,38.8 25.2,30.8 C39.2,23.8 57.2,20.8 92,10.8" fill="none" stroke="#3a3a3a" stroke-width="2.2"/><path d="M6.8,100 C7.8,82 14.8,42.2 30.8,34.2 C44.8,27.2 62.8,24.2 92,14.2" fill="none" stroke="#9a9a9a" stroke-width="1.0"/><path d="M12.4,100 C13.4,82 20.4,45.6 36.4,37.6 C50.4,30.6 68.4,27.6 92,17.6" fill="none" stroke="#303030" stroke-width="1.6"/><path d="M18.0,100 C19.0,82 26.0,49.0 42.0,41.0 C56.0,34.0 74.0,31.0 92,21.0" fill="none" stroke="#7c7c7c" stroke-width="2.2"/><path d="M23.6,100 C24.6,82 31.6,52.4 47.6,44.4 C61.6,37.4 79.6,34.4 92,24.4" fill="none" stroke="#474747" stroke-width="1.0"/><path d="M29.2,100 C30.2,82 37.2,55.8 53.2,47.8 C67.2,40.8 85.2,37.8 92,27.8" fill="none" stroke="#a2a2a2" stroke-width="1.6"/><path d="M34.8,100 C35.8,82 42.8,59.2 58.8,51.2 C72.8,44.2 90.8,41.2 92,31.2" fill="none" stroke="#2c2c2c" stroke-width="2.2"/><path d="M40.4,100 C41.4,82 48.4,62.6 64.4,54.6 C78.4,47.6 96.4,44.6 92,34.6" fill="none" stroke="#8a8a8a" stroke-width="1.0"/><path d="M46.0,100 C47.0,82 54.0,66.0 70.0,58.0 C84.0,51.0 102.0,48.0 92,38.0" fill="none" stroke="#3a3a3a" stroke-width="1.6"/><path d="M51.6,100 C52.6,82 59.6,69.4 75.6,61.4 C89.6,54.4 107.6,51.4 92,41.4" fill="none" stroke="#9a9a9a" stroke-width="2.2"/><path d="M57.2,100 C58.2,82 65.2,72.8 81.2,64.8 C95.2,57.8 113.2,54.8 92,44.8" fill="none" stroke="#303030" stroke-width="1.0"/><path d="M62.8,100 C63.8,82 70.8,76.2 86.8,68.2 C100.8,61.2 118.8,58.2 92,48.2" fill="none" stroke="#7c7c7c" stroke-width="1.6"/><path d="M68.4,100 C69.4,82 76.4,79.6 92.4,71.6 C106.4,64.6 124.4,61.6 92,51.6" fill="none" stroke="#474747" stroke-width="2.2"/><path d="M74.0,100 C75.0,82 82.0,83.0 98.0,75.0 C112.0,68.0 130.0,65.0 92,55.0" fill="none" stroke="#a2a2a2" stroke-width="1.0"/></g></g>
<g transform="translate(36,554.2)"><text x="90.7" y="40.4" font-family="Liberation Sans" font-weight="700" font-size="10.6" fill="#000" stroke="#000" stroke-width="0.35" textLength="59.3" lengthAdjust="spacingAndGlyphs">Overcoming</text><text x="90.7" y="50.5" font-family="Liberation Sans" font-weight="700" font-size="10.6" fill="#000" stroke="#000" stroke-width="0.35" textLength="61.8" lengthAdjust="spacingAndGlyphs">nervousness</text><rect x="90.7" y="56.8" width="30.9" height="1.2" fill="#5f7f3f"/><text x="90.7" y="70.3" font-family="Liberation Sans" font-weight="700" font-size="4.2" fill="#5f7f3f" stroke="#5f7f3f" stroke-width="0.2" textLength="56.2" lengthAdjust="spacingAndGlyphs">Confidence-building strategies</text></g>
<g transform="translate(36,675.6)" clip-path="url(#tclip)"><polygon points="0.00,55.90 13.70,69.20 0.00,83.20" fill="#4594a0"/><polygon points="0.00,84.40 13.70,98.40 0.00,98.40" fill="#80a656"/><polygon points="14.00,83.80 21.00,76.50 42.80,98.40 28.20,98.40" fill="#f8d347"/><text x="8.8" y="24.4" font-family="Liberation Sans" font-weight="700" font-size="7.4" fill="#000" stroke="#000" stroke-width="0.3" textLength="84.9" lengthAdjust="spacingAndGlyphs">Engaging the audience</text><rect x="9" y="31.2" width="31" height="1.1" fill="#8fa874"/><circle cx="53.7" cy="37.400000000000006" r="0.45" fill="#555"/><text x="56.7" y="38.900000000000006" font-family="Liberation Sans" font-weight="400" font-size="3.3" fill="#222" stroke="#222" stroke-width="0.12" textLength="102" lengthAdjust="spacingAndGlyphs">Make eye contact with your audience to create a sense of intimacy</text><text x="56.7" y="42.900000000000006" font-family="Liberation Sans" font-weight="400" font-size="3.3" fill="#222" stroke="#222" stroke-width="0.12" textLength="25" lengthAdjust="spacingAndGlyphs">and involvement</text><circle cx="53.7" cy="48.1" r="0.45" fill="#555"/><text x="56.7" y="49.6" font-family="Liberation Sans" font-weight="400" font-size="3.3" fill="#222" stroke="#222" stroke-width="0.12" textLength="95" lengthAdjust="spacingAndGlyphs">Share relatable stories that enhance your presentation using narratives</text><text x="56.7" y="53.6" font-family="Liberation Sans" font-weight="400" font-size="3.3" fill="#222" stroke="#222" stroke-width="0.12" textLength="78" lengthAdjust="spacingAndGlyphs">that make your message memorable and impactful</text><circle cx="53.7" cy="59.1" r="0.45" fill="#555"/><text x="56.7" y="60.6" font-family="Liberation Sans" font-weight="400" font-size="3.3" fill="#222" stroke="#222" stroke-width="0.12" textLength="103" lengthAdjust="spacingAndGlyphs">Encourage questions and provide thoughtful responses to enhance</text><text x="56.7" y="64.6" font-family="Liberation Sans" font-weight="400" font-size="3.3" fill="#222" stroke="#222" stroke-width="0.12" textLength="35" lengthAdjust="spacingAndGlyphs">audience participation</text><circle cx="53.7" cy="70.10000000000001" r="0.45" fill="#555"/><text x="56.7" y="71.60000000000001" font-family="Liberation Sans" font-weight="400" font-size="3.3" fill="#222" stroke="#222" stroke-width="0.12" textLength="98" lengthAdjust="spacingAndGlyphs">Use live polls or surveys to gather audience opinions, garnering</text><text x="56.7" y="75.60000000000001" font-family="Liberation Sans" font-weight="400" font-size="3.3" fill="#222" stroke="#222" stroke-width="0.12" textLength="87" lengthAdjust="spacingAndGlyphs">engagement and making sure the audience feel included</text></g>
<g transform="translate(36,797.0) scale(0.138449)"><polygon points="0.00,78.80 318.40,397.10 212.40,502.30 0.00,291.00" fill="#4594a0"/>
<polygon points="0.00,504.60 206.30,711.00 0.00,711.00" fill="#80a656"/>
<polygon points="424.70,503.20 631.60,711.00 217.80,711.00" fill="#f8d347"/></g>
<g transform="translate(36,797.0)"><text x="90.6" y="39.4" font-family="Liberation Sans" font-weight="700" font-size="10.6" fill="#000" stroke="#000" stroke-width="0.35" textLength="48" lengthAdjust="spacingAndGlyphs">Selecting</text><text x="90.6" y="49.4" font-family="Liberation Sans" font-weight="700" font-size="10.6" fill="#000" stroke="#000" stroke-width="0.35" textLength="52.8" lengthAdjust="spacingAndGlyphs">visual aids</text><rect x="90.6" y="56.6" width="31" height="1.2" fill="#5f7f3f"/><text x="90.6" y="70" font-family="Liberation Sans" font-weight="700" font-size="4.2" fill="#5f7f3f" stroke="#5f7f3f" stroke-width="0.2" textLength="53.4" lengthAdjust="spacingAndGlyphs">Enhancing your presentation</text></g>
<g transform="translate(36,918.5)" clip-path="url(#t7clip)"><polygon points="127.70,0.00 158.50,0.00 142.80,15.60" fill="#f8d347"/><polygon points="159.90,0.00 175.00,0.00 175.00,15.60" fill="#80a656"/><polygon points="151.70,23.90 158.50,16.70 175.00,32.80 175.00,47.80" fill="#4594a0"/><text x="8.9" y="24.6" font-family="Liberation Sans" font-weight="700" font-size="7.4" fill="#000" stroke="#000" stroke-width="0.3" textLength="106.5" lengthAdjust="spacingAndGlyphs">Effective delivery techniques</text><rect x="9" y="31" width="31" height="1.1" fill="#7c9a5c"/><text x="8.9" y="41.9" font-family="Liberation Sans" font-weight="400" font-size="3.3" fill="#222" stroke="#222" stroke-width="0.12" textLength="63" lengthAdjust="spacingAndGlyphs">This is a powerful tool in public speaking.</text><text x="8.9" y="46.0" font-family="Liberation Sans" font-weight="400" font-size="3.3" fill="#222" stroke="#222" stroke-width="0.12" textLength="64" lengthAdjust="spacingAndGlyphs">It involves varying pitch, tone, and volume</text><text x="8.9" y="50.0" font-family="Liberation Sans" font-weight="400" font-size="3.3" fill="#222" stroke="#222" stroke-width="0.12" textLength="64" lengthAdjust="spacingAndGlyphs">to convey emotion, emphasize points, and</text><text x="8.9" y="53.9" font-family="Liberation Sans" font-weight="400" font-size="3.3" fill="#222" stroke="#222" stroke-width="0.12" textLength="26" lengthAdjust="spacingAndGlyphs">maintain interest</text><circle cx="10.2" cy="59.1" r="0.45" fill="#333"/><text x="12.6" y="60.6" font-family="Liberation Sans" font-weight="400" font-size="3.3" fill="#222" stroke="#222" stroke-width="0.12" textLength="22" lengthAdjust="spacingAndGlyphs">Pitch variation</text><circle cx="10.2" cy="66.10000000000001" r="0.45" fill="#333"/><text x="12.6" y="67.60000000000001" font-family="Liberation Sans" font-weight="400" font-size="3.3" fill="#222" stroke="#222" stroke-width="0.12" textLength="22" lengthAdjust="spacingAndGlyphs">Tone inflection</text><circle cx="10.2" cy="73.10000000000001" r="0.45" fill="#333"/><text x="12.6" y="74.60000000000001" font-family="Liberation Sans" font-weight="400" font-size="3.3" fill="#222" stroke="#222" stroke-width="0.12" textLength="22" lengthAdjust="spacingAndGlyphs">Volume control</text><text x="84.5" y="41.9" font-family="Liberation Sans" font-weight="400" font-size="3.3" fill="#222" stroke="#222" stroke-width="0.12" textLength="60" lengthAdjust="spacingAndGlyphs">Effective body language enhances your</text><text x="84.5" y="46.0" font-family="Liberation Sans" font-weight="400" font-size="3.3" fill="#222" stroke="#222" stroke-width="0.12" textLength="61" lengthAdjust="spacingAndGlyphs">message, making it more impactful and</text><text x="84.5" y="50.0" font-family="Liberation Sans" font-weight="400" font-size="3.3" fill="#222" stroke="#222" stroke-width="0.12" textLength="17.5" lengthAdjust="spacingAndGlyphs">memorable</text><circle cx="85.5" cy="54.900000000000006" r="0.45" fill="#333"/><text x="88.2" y="56.400000000000006" font-family="Liberation Sans" font-weight="400" font-size="3.3" fill="#222" stroke="#222" stroke-width="0.12" textLength="35.5" lengthAdjust="spacingAndGlyphs">Meaningful eye contact</text><circle cx="85.5" cy="62.0" r="0.45" fill="#333"/><text x="88.2" y="63.5" font-family="Liberation Sans" font-weight="400" font-size="3.3" fill="#222" stroke="#222" stroke-width="0.12" textLength="31" lengthAdjust="spacingAndGlyphs">Purposeful gestures</text><circle cx="85.5" cy="68.9" r="0.45" fill="#333"/><text x="88.2" y="70.4" font-family="Liberation Sans" font-weight="400" font-size="3.3" fill="#222" stroke="#222" stroke-width="0.12" textLength="34.5" lengthAdjust="spacingAndGlyphs">Maintain good posture</text><circle cx="85.5" cy="75.9" r="0.45" fill="#333"/><text x="88.2" y="77.4" font-family="Liberation Sans" font-weight="400" font-size="3.3" fill="#222" stroke="#222" stroke-width="0.12" textLength="30" lengthAdjust="spacingAndGlyphs">Facial expressions</text></g>
<rect x="34.5" y="188.5" width="178" height="101.4" fill="none" stroke="#c43e1c" stroke-width="3"/>
<rect x="35.5" y="310.8" width="176" height="99.4" fill="none" stroke="#cfcfcf" stroke-width="1"/>
<rect x="35.5" y="432.4" width="176" height="99.4" fill="none" stroke="#cfcfcf" stroke-width="1"/>
<rect x="35.5" y="553.7" width="176" height="99.4" fill="none" stroke="#cfcfcf" stroke-width="1"/>
<rect x="35.5" y="675.1" width="176" height="99.4" fill="none" stroke="#cfcfcf" stroke-width="1"/>
<rect x="35.5" y="796.5" width="176" height="99.4" fill="none" stroke="#cfcfcf" stroke-width="1"/>
<path d="M35.5,993.8 V918.0 H211.5 V993.8" fill="none" stroke="#cfcfcf" stroke-width="1"/>
<circle cx="18.1" cy="18.9" r="6.4" fill="#fe5f57" stroke="#e2463f" stroke-width="0.5"/>
<circle cx="38.1" cy="18.9" r="6.4" fill="#febc2e" stroke="#e1a325" stroke-width="0.5"/>
<circle cx="58.1" cy="18.9" r="6.4" fill="#28c840" stroke="#1dad2b" stroke-width="0.5"/>
<circle cx="15.6" cy="51.6" r="1.75" fill="#3d4451"/>
<circle cx="15.6" cy="57.6" r="1.75" fill="#3d4451"/>
<circle cx="15.6" cy="63.5" r="1.75" fill="#3d4451"/>
<circle cx="21.6" cy="51.6" r="1.75" fill="#3d4451"/>
<circle cx="21.6" cy="57.6" r="1.75" fill="#3d4451"/>
<circle cx="21.6" cy="63.5" r="1.75" fill="#3d4451"/>
<circle cx="27.6" cy="51.6" r="1.75" fill="#3d4451"/>
<circle cx="27.6" cy="57.6" r="1.75" fill="#3d4451"/>
<circle cx="27.6" cy="63.5" r="1.75" fill="#3d4451"/>
<path d="M71.1,48.8 A9.1,9.1 0 0 1 80.2,57.9 L71.1,57.9 Z" fill="#ff8f6b"/>
<path d="M80.2,57.9 A9.1,9.1 0 0 1 71.1,67 A9.1,9.1 0 0 1 62,57.9 Z" fill="#ed6c47"/>
<path d="M71.1,48.8 L71.1,57.9 L62,57.9 A9.1,9.1 0 0 1 71.1,48.8 Z" fill="#ff8f6b"/>
<rect x="60.6" y="52.6" width="12.6" height="12.6" rx="1" fill="#000" opacity="0.18"/>
<rect x="59.9" y="51.8" width="12.6" height="12.6" rx="1" fill="#c43e1c"/>
<path d="M63.6,62 V54.6 H66.6 A2.2,2.2 0 0 1 66.6,59 H63.6" fill="none" stroke="#fff" stroke-width="1.6"/>
<path d="M194.5,62 H202.5 A2.8,2.8 0 0 0 203.2,56.5 A4.3,4.3 0 0 0 195.2,55.8 A3.1,3.1 0 0 0 194.5,62 Z" fill="none" stroke="#616161" stroke-width="1"/>
<polyline points="214.5,57.3 218.4,61.1 222.3,57.3" fill="none" stroke="#616161" stroke-width="1"/>
<circle cx="718.8" cy="55" r="4.6" fill="none" stroke="#616161" stroke-width="1.1"/>
<line x1="715.5" y1="58.4" x2="709.6" y2="64.2" stroke="#616161" stroke-width="1.1"/>
<polygon points="1831.87,50.22 1834.18,51.18 1833.94,53.22 1834.78,54.06 1836.82,53.82 1837.78,56.13 1836.17,57.41 1836.17,58.59 1837.78,59.87 1836.82,62.18 1834.78,61.94 1833.94,62.78 1834.18,64.82 1831.87,65.78 1830.59,64.17 1829.41,64.17 1828.13,65.78 1825.82,64.82 1826.06,62.78 1825.22,61.94 1823.18,62.18 1822.22,59.87 1823.83,58.59 1823.83,57.41 1822.22,56.13 1823.18,53.82 1825.22,54.06 1826.06,53.22 1825.82,51.18 1828.13,50.22 1829.41,51.83 1830.59,51.83" fill="none" stroke="#616161" stroke-width="1" stroke-linejoin="round"/>
<circle cx="1830" cy="58" r="2.7" fill="none" stroke="#616161" stroke-width="1"/>
<circle cx="1878" cy="58" r="15.8" fill="none" stroke="#424242" stroke-width="1.1"/>
<circle cx="1878" cy="55.2" r="5.4" fill="none" stroke="#424242" stroke-width="1.1"/>
<path d="M1870.3,67.8 A7.9,7.6 0 0 1 1885.9,67.8" fill="none" stroke="#424242" stroke-width="1.1"/>
<rect x="60.9" y="110" width="38.1" height="2" rx="1" fill="#c43e1c"/>
<path d="M1419.6,91.7 H1432.6 V101.2 H1424.6 L1421.1,104.4 V101.2 H1419.6 Z" fill="none" stroke="#242424" stroke-width="1.1" stroke-linejoin="round"/>
<polyline points="1522.4,97.4 1524.4,96.6 1527,92.8 1531.5,102.8 1534.3,97.4 1535.8,97.2" fill="none" stroke="#242424" stroke-width="1.1" stroke-linejoin="round"/>
<circle cx="1522.4" cy="97.4" r="1.35" fill="#242424"/><circle cx="1535.8" cy="97.2" r="1.35" fill="#242424"/>
<rect x="1615.7" y="91.5" width="11.8" height="7.3" fill="none" stroke="#242424" stroke-width="1.1"/>
<line x1="1618.5" y1="94.6" x2="1624.5" y2="94.6" stroke="#242424" stroke-width="1.1"/>
<line x1="1621.6" y1="98.8" x2="1621.6" y2="103.4" stroke="#242424" stroke-width="1.1"/>
<line x1="1618.2" y1="103.4" x2="1625" y2="103.4" stroke="#242424" stroke-width="1.1"/>
<polyline points="1687.2,95.7 1691.35,99.7 1695.5,95.7" fill="none" stroke="#242424" stroke-width="1.1"/>
<path d="M1720.3,104.6 L1721.2,100.6 L1731.4,90.4 A2,2 0 0 1 1734.6,93.6 L1724.4,103.8 Z M1729.6,92.2 L1732.8,95.4" fill="none" stroke="#242424" stroke-width="1.1" stroke-linejoin="round"/>
<polyline points="1782.5,95.7 1786.5,99.7 1790.5,95.7" fill="none" stroke="#242424" stroke-width="1.1"/>
<path d="M1819.4,95.8 V104.2 H1832.6 V101.4" fill="none" stroke="#fff" stroke-width="1.2"/>
<path d="M1822.8,101.6 C1823.2,97.6 1826,95.4 1830,95.4 V98.4 L1834.4,93.6 L1830,89.2 V92.2 C1825.6,92.4 1822.8,96.4 1822.8,101.6 Z" fill="none" stroke="#fff" stroke-width="1.2" stroke-linejoin="round"/>
<polyline points="1875.0,95.7 1878.95,99.7 1882.9,95.7" fill="none" stroke="#fff" stroke-width="1.2"/>
<path d="M22.2,130 V137 H29.2" fill="none" stroke="#a0a0a0" stroke-width="1.1"/>
<path d="M22.6,136.6 L29.5,130.6 A5.6,5.6 0 0 1 36.6,139.6 L28.8,146.6" fill="none" stroke="#a0a0a0" stroke-width="1.1"/>
<polyline points="45.0,136.2 49.45,141.2 53.9,136.2" fill="none" stroke="#424242" stroke-width="1.1"/>
<path d="M72.6,131.8 H69.6 V146.4 H82.6 V131.8 H79.6" fill="none" stroke="#242424" stroke-width="1.1"/>
<path d="M72.6,133.2 V130.6 H74.8 A1.3,1.3 0 0 1 77.4,130.6 H79.6 V133.2 Z" fill="none" stroke="#242424" stroke-width="1.1" stroke-linejoin="round"/>
<polyline points="90.9,136.2 95.35,141.2 99.8,136.2" fill="none" stroke="#424242" stroke-width="1.1"/>
<g transform="translate(124.2,137.6) rotate(-45)"><path d="M0,-5 L-6.7,-8.2 L-6.7,4 L0,5 Z" fill="#fff" stroke="#f4a46d" stroke-width="1" stroke-linejoin="round"/><path d="M-0.4,0.5 L-6.3,1.2 L-6.3,3.8 L-0.4,4.6 Z" fill="#fdeec6"/><path d="M0,-5.2 H2.6 V-1.5 H8.6 A1.5,1.5 0 0 1 8.6,1.5 H2.6 V5.2 H0 Z" fill="#fff" stroke="#9a9a9a" stroke-width="1" stroke-linejoin="round"/></g>
<path d="M147.2,131.6 L161,145 M161,131.6 L147.2,145" stroke="#e81123" stroke-width="1.2"/>
<line x1="174.5" y1="126" x2="174.5" y2="149.6" stroke="#c8c8c8" stroke-width="1"/>
<path d="M196,131.5 H203.5 V144.4 H186.5 V135" fill="none" stroke="#333" stroke-width="1.1"/>
<path d="M196,133.4 H201.4 V142.4 H188.5 V139.2 M192,136.5 H201.4 M194.4,136.5 V142.4" fill="none" stroke="#616161" stroke-width="0.9"/>
<path d="M189.6,128.3 V136.8 M185.2,132.4 H193.8" stroke="#2ca53a" stroke-width="1.15" stroke-linecap="round"/>
<polyline points="276.4,136.4 280.54999999999995,140.9 284.7,136.4" fill="none" stroke="#424242" stroke-width="1.1"/>
<path d="M298.3,142.5 V130.3 H313.6" fill="none" stroke="#333" stroke-width="1.1"/>
<path d="M304.8,144.5 H300.4 V132.5 H315.6 V143.4" fill="none" stroke="#333" stroke-width="1.1"/>
<path d="M302.5,142.5 V134.5 H313.6 V137" fill="none" stroke="#777" stroke-width="0.9"/>
<circle cx="309.5" cy="140.5" r="4.1" fill="#fafafa" stroke="#2b88d8" stroke-width="1.15"/>
<line x1="312.4" y1="143.4" x2="316.6" y2="147.4" stroke="#2b88d8" stroke-width="1.2" stroke-linecap="round"/>
<rect x="330.6" y="131.6" width="16.8" height="12.6" fill="none" stroke="#333" stroke-width="1.1"/>
<path d="M332.8,133.6 H345.2 V142.3 H332.8 Z M332.8,136 H345.2 M338.7,136 V142.3" fill="none" stroke="#666" stroke-width="0.85"/>
<polyline points="354.5,136.4 358.6,140.9 362.7,136.4" fill="none" stroke="#424242" stroke-width="1.1"/>
<rect x="376.6" y="131.6" width="16.8" height="12.6" fill="#f4f4f4" stroke="#333" stroke-width="1.1"/>
<path d="M378,143.2 L392.4,132.8 V143.2 Z" fill="#7ab8ec" stroke="#0f6cbd" stroke-width="0.9"/>
<path d="M376.6,144.2 L393.4,131.6" stroke="#333" stroke-width="1.1"/>
<line x1="405.4" y1="126" x2="405.4" y2="149.6" stroke="#c8c8c8" stroke-width="1"/>
<polyline points="525.3,136.3 529.4,140.7 533.5,136.3" fill="none" stroke="#616161" stroke-width="1.1"/>
<polyline points="576.4,136.3 580.5,140.7 584.6,136.3" fill="none" stroke="#616161" stroke-width="1.1"/>
<path d="M604.9,143.6 L610.3,130.4 L615.7,143.6 M606.9,139 H613.7" fill="none" stroke="#a6a6a6" stroke-width="1.1"/>
<polyline points="617.2,133.2 619.5,130 621.8,133.2" fill="none" stroke="#7fb3e6" stroke-width="0.9"/>
<path d="M638.7,143.6 L643.3,133.8 L647.9,143.6 M640.4,140 H646.2" fill="none" stroke="#a6a6a6" stroke-width="1.1"/>
<polyline points="649.4,130.4 651.6,132.8 653.8,130.4" fill="none" stroke="#7fb3e6" stroke-width="0.9"/>
<path d="M672,130.5 H677.2 C680.6,130.5 681.8,132 681.8,134 C681.8,135.6 680.8,136.6 679.4,137 C681.4,137.4 682.6,138.6 682.6,140.4 C682.6,142.6 681,143.8 677.6,143.8 H672 Z M674.8,132.8 V135.9 H677 C678.4,135.9 679,135.3 679,134.3 C679,133.3 678.4,132.8 677,132.8 Z M674.8,138 V141.5 H677.4 C679,141.5 679.7,140.9 679.7,139.7 C679.7,138.6 679,138 677.4,138 Z" fill="#a6a6a6" fill-rule="evenodd"/>
<path d="M707.6,130.6 H713.2 M704.8,143.6 H710.4 M710.4,130.6 L707.6,143.6" fill="none" stroke="#a6a6a6" stroke-width="1.1"/>
<path d="M736,130.4 V139 C736,141.6 737.8,143.2 741.1,143.2 C744.4,143.2 746.2,141.6 746.2,139 V130.4 M735.2,146.4 H747" fill="none" stroke="#a6a6a6" stroke-width="1.1"/>
<path d="M767.2,141.2 L768.2,138.4 L776.6,130 A1.7,1.7 0 0 1 779.4,132.8 L771,141.2 L768.2,141.6 Z" fill="none" stroke="#a6a6a6" stroke-width="1"/>
<path d="M766.4,141.6 L768.4,139 L770.4,141 Z" fill="#a6a6a6"/>
<rect x="763" y="142.8" width="20" height="5" fill="#fdfd8f"/>
<polyline points="788.3,136.0 792.45,140.5 796.6,136.0" fill="none" stroke="#a6a6a6" stroke-width="1.1"/>
<path d="M813.8,141 L819,128.8 L824.2,141 M815.6,136.6 H822.4" fill="none" stroke="#a6a6a6" stroke-width="1.1"/>
<rect x="809" y="142.8" width="20" height="5" fill="#f8a49c"/>
<polyline points="834.3,136.0 838.4,140.5 842.5,136.0" fill="none" stroke="#a6a6a6" stroke-width="1.1"/>
<circle cx="857.4" cy="137.3" r="1.25" fill="#616161"/><circle cx="864.5" cy="137.3" r="1.25" fill="#616161"/><circle cx="871.6" cy="137.3" r="1.25" fill="#616161"/>
<line x1="885.5" y1="126" x2="885.5" y2="149.6" stroke="#c8c8c8" stroke-width="1"/>
<rect x="897.1" y="128.9" width="3" height="3" fill="#93c0ea"/>
<line x1="903" y1="130.4" x2="915" y2="130.4" stroke="#a6a6a6" stroke-width="1"/>
<rect x="897.1" y="135.9" width="3" height="3" fill="#93c0ea"/>
<line x1="903" y1="137.4" x2="915" y2="137.4" stroke="#a6a6a6" stroke-width="1"/>
<rect x="897.1" y="143.0" width="3" height="3" fill="#93c0ea"/>
<line x1="903" y1="144.5" x2="915" y2="144.5" stroke="#a6a6a6" stroke-width="1"/>
<polyline points="921.3,136.0 925.5999999999999,140.5 929.9,136.0" fill="none" stroke="#a6a6a6" stroke-width="1.1"/>
<line x1="949.2" y1="130.4" x2="960.8" y2="130.4" stroke="#a6a6a6" stroke-width="1"/>
<line x1="949.2" y1="137.4" x2="960.8" y2="137.4" stroke="#a6a6a6" stroke-width="1"/>
<line x1="949.2" y1="144.5" x2="960.8" y2="144.5" stroke="#a6a6a6" stroke-width="1"/>
<path d="M943.2,129.1 L944.6,128.2 V132.8 M942.9,135.9 Q943.5,135 944.5,135.1 Q945.9,135.3 945.5,136.7 L942.9,139.7 H946 M942.9,142.3 H945.6 L944,144.1 Q946,144.1 945.9,145.6 Q945.6,147 942.8,146.6" fill="none" stroke="#7fb3e6" stroke-width="0.85" stroke-linejoin="round"/>
<polyline points="967.2,136.0 971.45,140.5 975.7,136.0" fill="none" stroke="#a6a6a6" stroke-width="1.1"/>
<line x1="989" y1="129.6" x2="1007" y2="129.6" stroke="#242424" stroke-width="1.1"/>
<line x1="989" y1="133.6" x2="1003" y2="133.6" stroke="#242424" stroke-width="1.1"/>
<line x1="989" y1="137.6" x2="1007" y2="137.6" stroke="#242424" stroke-width="1.1"/>
<line x1="989" y1="141.6" x2="1003" y2="141.6" stroke="#242424" stroke-width="1.1"/>
<line x1="989" y1="145.6" x2="1007" y2="145.6" stroke="#242424" stroke-width="1.1"/>
<polyline points="1013.1,136.0 1017.55,140.5 1022.0,136.0" fill="none" stroke="#242424" stroke-width="1.2"/>
<line x1="1035" y1="129.4" x2="1053" y2="129.4" stroke="#a6a6a6"/><line x1="1045" y1="133.4" x2="1053" y2="133.4" stroke="#a6a6a6"/><line x1="1045" y1="137.4" x2="1053" y2="137.4" stroke="#a6a6a6"/><line x1="1045" y1="141.4" x2="1053" y2="141.4" stroke="#a6a6a6"/><line x1="1035" y1="145.4" x2="1053" y2="145.4" stroke="#a6a6a6"/>
<path d="M1043,137.4 H1035.4 M1038.4,134.2 L1035.2,137.4 L1038.4,140.6" fill="none" stroke="#7fb3e6" stroke-width="1"/>
<line x1="1067" y1="129.4" x2="1085" y2="129.4" stroke="#a6a6a6"/><line x1="1077" y1="133.4" x2="1085" y2="133.4" stroke="#a6a6a6"/><line x1="1077" y1="137.4" x2="1085" y2="137.4" stroke="#a6a6a6"/><line x1="1077" y1="141.4" x2="1085" y2="141.4" stroke="#a6a6a6"/><line x1="1067" y1="145.4" x2="1085" y2="145.4" stroke="#a6a6a6"/>
<path d="M1067.2,137.4 H1074.8 M1071.8,134.2 L1075,137.4 L1071.8,140.6" fill="none" stroke="#7fb3e6" stroke-width="1"/>
<line x1="1108.8" y1="129.4" x2="1117" y2="129.4" stroke="#a6a6a6"/><line x1="1108.8" y1="133.4" x2="1117" y2="133.4" stroke="#a6a6a6"/><line x1="1108.8" y1="137.4" x2="1117" y2="137.4" stroke="#a6a6a6"/><line x1="1108.8" y1="141.4" x2="1117" y2="141.4" stroke="#a6a6a6"/><line x1="1108.8" y1="145.4" x2="1117" y2="145.4" stroke="#a6a6a6"/>
<path d="M1102.4,129.2 V147 M1099,132.4 L1102.4,129 L1105.8,132.4 M1099,143.8 L1102.4,147.2 L1105.8,143.8" fill="none" stroke="#7fb3e6" stroke-width="1"/>
<polyline points="1123.2,136.0 1127.5,140.5 1131.8,136.0" fill="none" stroke="#a6a6a6" stroke-width="1.1"/>
<line x1="1142.6" y1="126" x2="1142.6" y2="149.6" stroke="#c8c8c8" stroke-width="1"/>
<rect x="1154.2" y="129.4" width="10.8" height="10.8" fill="#8ec3f0" stroke="#2b7cd3" stroke-width="1"/>
<circle cx="1166" cy="141" r="5.6" fill="#fff" stroke="#242424" stroke-width="1.1"/>
<polyline points="1226.5,136.1 1230.65,140.7 1234.8,136.1" fill="none" stroke="#242424" stroke-width="1.2"/>
<path d="M1257.4,134.8 V129.6 A1,1 0 0 0 1255.4,129.6 V131.8 L1249.8,137.2 L1254.9,142.2 L1260.6,136.6 L1259.2,135.2" fill="none" stroke="#9a9a9a" stroke-width="1.1" stroke-linejoin="round"/>
<path d="M1259.4,134 C1261.4,132.6 1263.6,133.6 1263.6,136.2 L1263.2,141.2 C1262.8,139 1262.6,137 1261.6,135.6 Z" fill="#a9c6ea" stroke="#8db5e6" stroke-width="0.5"/>
<rect x="1246.8" y="143.1" width="20" height="4.6" fill="#f9caaf"/>
<polyline points="1272.3,136.1 1276.4499999999998,140.7 1280.6,136.1" fill="none" stroke="#a6a6a6" stroke-width="1.1"/>
<path d="M1301,140.6 H1294.4 V130.4 H1306" fill="none" stroke="#a6a6a6" stroke-width="1"/>
<path d="M1301.4,141 L1302.2,138.2 L1309.6,130.8 A1.5,1.5 0 0 1 1311.8,133 L1304.4,140.4 Z" fill="none" stroke="#7fb3e6" stroke-width="1"/>
<rect x="1293" y="143.1" width="20" height="4.6" fill="#b4c6eb"/>
<polyline points="1318.3,136.1 1322.4499999999998,140.7 1326.6,136.1" fill="none" stroke="#a6a6a6" stroke-width="1.1"/>
<path d="M1340.4,145.6 V130.2 Q1340.4,129.4 1341.2,129.4 H1356.4 Q1357.2,129.4 1357.2,130.2 V136 M1348,146.4 H1356.4 Q1357.2,146.4 1357.2,145.6 V143" fill="none" stroke="#a6a6a6" stroke-width="1"/>
<path d="M1344.4,146.8 C1345.4,144 1347,142.4 1349,142.6 L1358,134 L1359,135 L1350.6,144.2 C1350.6,146.2 1348,147.4 1344.4,146.8 Z" fill="#c9dff5" stroke="#7fb3e6" stroke-width="0.8"/>
<polyline points="1364.4,136.1 1368.6,140.7 1372.8,136.1" fill="none" stroke="#a6a6a6" stroke-width="1.1"/>
<rect x="1389.8" y="132.6" width="11" height="11" fill="#fbe0a0" stroke="#e3710f" stroke-width="1.1"/>
<rect x="1386.8" y="129.8" width="6.8" height="6.6" fill="#fafafa" stroke="#242424" stroke-width="1.1"/>
<rect x="1396.8" y="139.6" width="6.8" height="6.6" fill="#fafafa" stroke="#242424" stroke-width="1.1"/>
<polyline points="1410.5,136.1 1414.7,140.7 1418.9,136.1" fill="none" stroke="#242424" stroke-width="1.2"/>
<line x1="1429.6" y1="126" x2="1429.6" y2="149.6" stroke="#c8c8c8" stroke-width="1"/>
<circle cx="1453.2" cy="135" r="5.8" fill="none" stroke="#242424" stroke-width="1.1"/>
<line x1="1449" y1="139.2" x2="1441.6" y2="146.4" stroke="#242424" stroke-width="1.2"/>
<polyline points="1495.7,136.1 1499.75,140.7 1503.8,136.1" fill="none" stroke="#242424" stroke-width="1.2"/>
<line x1="1514.4" y1="126" x2="1514.4" y2="149.6" stroke="#c8c8c8" stroke-width="1"/>
<rect x="1530.4" y="129.2" width="8" height="13" rx="2.4" fill="#86bdf0" stroke="#2b7cd3" stroke-width="0.9"/>
<path d="M1528,137.8 V139.6 A6.4,5 0 0 0 1540.8,139.6 V137.8 M1534.4,144.6 V146.4 M1531.4,146.4 H1537.4" fill="none" stroke="#242424" stroke-width="1"/>
<polyline points="1550.5,136.1 1554.3,140.7 1558.1,136.1" fill="none" stroke="#a6a6a6" stroke-width="1.1"/>
<line x1="1569.5" y1="126" x2="1569.5" y2="149.6" stroke="#c8c8c8" stroke-width="1"/>
<rect x="1581.6" y="129.4" width="16.2" height="16.2" rx="2.6" fill="none" stroke="#d83b01" stroke-width="1.1"/>
<rect x="1584.6" y="132.4" width="4.2" height="4.2" rx="0.6" fill="none" stroke="#d83b01" stroke-width="1"/><rect x="1590.6" y="132.4" width="4.2" height="4.2" rx="0.6" fill="none" stroke="#d83b01" stroke-width="1"/><rect x="1584.6" y="138.4" width="4.2" height="4.2" rx="0.6" fill="none" stroke="#d83b01" stroke-width="1"/><rect x="1590.6" y="138.4" width="4.2" height="4.2" rx="0.6" fill="none" stroke="#d83b01" stroke-width="1"/>
<polyline points="1657.5,136.1 1661.65,140.7 1665.8,136.1" fill="none" stroke="#242424" stroke-width="1.2"/>
<rect x="1688.4" y="131.6" width="17.2" height="13" fill="none" stroke="#242424" stroke-width="1"/>
<rect x="1690.6" y="133.8" width="13" height="8.6" fill="none" stroke="#242424" stroke-width="0.8"/>
<line x1="1697.4" y1="136.4" x2="1703.6" y2="136.4" stroke="#242424" stroke-width="0.8"/><line x1="1697.4" y1="136.4" x2="1697.4" y2="142.4" stroke="#242424" stroke-width="0.8"/>
<path d="M1690,128 H1695.6 L1692.4,132.6 H1694.6 L1687,140.4 L1689.4,134.4 H1687.4 Z" fill="#f7941d" stroke="#fff" stroke-width="0.6"/>
<line x1="1776.3" y1="126" x2="1776.3" y2="149.6" stroke="#c8c8c8" stroke-width="1"/>
<circle cx="1789.6" cy="137.4" r="1.6" fill="#242424"/><circle cx="1796.4" cy="137.4" r="1.6" fill="#242424"/><circle cx="1803.2" cy="137.4" r="1.6" fill="#242424"/>
<line x1="1817.5" y1="126" x2="1817.5" y2="149.6" stroke="#c8c8c8" stroke-width="1"/>
<polyline points="1850.6,133.6 1856.4,138.2 1850.6,142.8" fill="none" stroke="#242424" stroke-width="1.1"/>
<polyline points="1875.3,142.0 1879.4,147.0 1883.5,142.0" fill="none" stroke="#242424" stroke-width="1.1"/>
<rect x="254.6" y="179.6" width="15.4" height="11.2" rx="1" fill="none" stroke="#616161" stroke-width="1"/>
<line x1="259" y1="179.6" x2="259" y2="190.8" stroke="#616161" stroke-width="1"/>
<path d="M267.6,185.2 H262 M264.2,183 L262,185.2 L264.2,187.4" fill="none" stroke="#616161" stroke-width="1"/>
<path d="M1280.4,1010.2 H1292 M1280.4,1012.6 H1292 M1280.4,1015 H1286 M1283.6,1007 L1286.2,1004.6 L1288.8,1007" fill="none" stroke="#616161" stroke-width="1"/>
<rect x="1502.4" y="1005.4" width="12" height="10" fill="none" stroke="#424242" stroke-width="1.1"/>
<rect x="1505" y="1007.6" width="7.4" height="4.4" fill="none" stroke="#424242" stroke-width="0.9"/>
<line x1="1502.4" y1="1014" x2="1514.4" y2="1014" stroke="#424242" stroke-width="0.9"/>
<rect x="1542.4" y="1005.2" width="5" height="4.4" fill="none" stroke="#424242" stroke-width="1.1"/>
<rect x="1542.4" y="1011.2" width="5" height="4.4" fill="none" stroke="#424242" stroke-width="1.1"/>
<rect x="1549.4" y="1005.2" width="5" height="4.4" fill="none" stroke="#424242" stroke-width="1.1"/>
<rect x="1549.4" y="1011.2" width="5" height="4.4" fill="none" stroke="#424242" stroke-width="1.1"/>
<rect x="1582.4" y="1004.4" width="10.4" height="6.6" fill="none" stroke="#424242" stroke-width="1.1"/>
<line x1="1584.8" y1="1007.4" x2="1590.4" y2="1007.4" stroke="#424242" stroke-width="1"/>
<path d="M1587.6,1011 V1015.2 M1584.4,1015.2 H1590.8" fill="none" stroke="#424242" stroke-width="1.1"/>
<line x1="1622" y1="1009.4" x2="1633" y2="1009.4" stroke="#424242" stroke-width="1.1"/>
<line x1="1656" y1="1008.7" x2="1676" y2="1008.7" stroke="#c43e1c" stroke-width="2"/>
<line x1="1688" y1="1008.7" x2="1768.7" y2="1008.7" stroke="#616161" stroke-width="2"/>
<circle cx="1682" cy="1008.7" r="7.2" fill="#fff" stroke="#e6e6e6" stroke-width="0.8"/>
<circle cx="1682" cy="1008.7" r="5.2" fill="#c43e1c"/>
<path d="M1791,1009.4 H1801.8 M1796.4,1004 V1014.8" fill="none" stroke="#424242" stroke-width="1.1"/>
<rect x="1866.2" y="1006.2" width="7.6" height="7.6" fill="none" stroke="#424242" stroke-width="1"/>
<path d="M1868,1004.6 L1870,1003.6 L1872,1004.6 M1868,1015.4 L1870,1016.4 L1872,1015.4 M1864.6,1008 L1863.8,1010 L1864.6,1012 M1875.4,1008 L1876.2,1010 L1875.4,1012" fill="none" stroke="#424242" stroke-width="1"/>
</svg>
<div class="t" style="left:104.62px;top:50.80px;font-size:14.3px;font-weight:400;color:#242424;transform:scaleX(0.9833);">Presentation</div>
<div class="t" style="left:736.46px;top:51.00px;font-size:14.5px;font-weight:400;color:#616161;transform:scaleX(0.9437);">Search (Alt + Q)</div>
<div class="t" style="left:16.58px;top:91.00px;font-size:14.8px;font-weight:400;color:#242424;transform:scaleX(0.9182);">File</div>
<div class="t" style="left:60.82px;top:91.00px;font-size:14.8px;font-weight:400;color:#242424;transform:scaleX(0.9842);-webkit-text-stroke:0.3px #242424;">Home</div>
<div class="t" style="left:121.76px;top:91.00px;font-size:14.8px;font-weight:400;color:#424242;transform:scaleX(0.9361);">Insert</div>
<div class="t" style="left:180.09px;top:91.00px;font-size:14.8px;font-weight:400;color:#424242;transform:scaleX(0.9059);">Draw</div>
<div class="t" style="left:234.75px;top:91.00px;font-size:14.8px;font-weight:400;color:#424242;transform:scaleX(0.9455);">Design</div>
<div class="t" style="left:302.30px;top:91.00px;font-size:14.8px;font-weight:400;color:#424242;transform:scaleX(0.9000);">Transitions</div>
<div class="t" style="left:392.40px;top:91.00px;font-size:14.8px;font-weight:400;color:#424242;transform:scaleX(0.9425);">Animations</div>
<div class="t" style="left:485.18px;top:91.00px;font-size:14.8px;font-weight:400;color:#424242;transform:scaleX(0.9205);">Slide Show</div>
<div class="t" style="left:576.92px;top:91.00px;font-size:14.8px;font-weight:400;color:#424242;transform:scaleX(0.8792);">Review</div>
<div class="t" style="left:643.70px;top:91.00px;font-size:14.8px;font-weight:400;color:#424242;transform:scaleX(0.9219);">View</div>
<div class="t" style="left:695.95px;top:91.00px;font-size:14.8px;font-weight:400;color:#424242;transform:scaleX(0.9517);">Help</div>
<div class="t" style="left:1437.00px;top:92.00px;font-size:13.4px;font-weight:400;color:#242424;transform:scaleX(0.9000);">Comments</div>
<div class="t" style="left:1540.71px;top:92.00px;font-size:13.4px;font-weight:400;color:#242424;transform:scaleX(0.8865);">Catch up</div>
<div class="t" style="left:1633.64px;top:92.00px;font-size:13.4px;font-weight:400;color:#242424;transform:scaleX(0.8556);">Present</div>
<div class="t" style="left:1740.38px;top:92.00px;font-size:13.4px;font-weight:400;color:#242424;transform:scaleX(0.9179);">Editing</div>
<div class="t" style="left:1838.17px;top:92.00px;font-size:13.4px;font-weight:700;color:#ffffff;transform:scaleX(0.8278);">Share</div>
<div class="t" style="left:208.94px;top:130.80px;font-size:14.3px;font-weight:400;color:#242424;transform:scaleX(0.9556);">New Slide</div>
<div class="t" style="left:545.87px;top:131.20px;font-size:14.3px;font-weight:400;color:#a6a6a6;transform:scaleX(0.9286);">12</div>
<div class="t" style="left:1176.08px;top:130.80px;font-size:14.3px;font-weight:400;color:#242424;transform:scaleX(0.9191);">Shapes</div>
<div class="t" style="left:1463.45px;top:130.80px;font-size:14.3px;font-weight:400;color:#242424;transform:scaleX(0.9538);">Find</div>
<div class="t" style="left:1604.40px;top:130.80px;font-size:14.3px;font-weight:400;color:#242424;transform:scaleX(0.9896);">Add-ins</div>
<div class="t" style="left:1711.03px;top:130.80px;font-size:14.3px;font-weight:400;color:#242424;transform:scaleX(0.9661);">Designer</div>
<div class="t" style="left:17.53px;top:192.80px;font-size:14.1px;font-weight:400;color:#c43e1c;transform:scaleX(0.8667);">1</div>
<div class="t" style="left:16.50px;top:313.80px;font-size:14.1px;font-weight:400;color:#242424;transform:scaleX(1.1000);">2</div>
<div class="t" style="left:16.50px;top:435.90px;font-size:14.1px;font-weight:400;color:#242424;transform:scaleX(1.1000);">3</div>
<div class="t" style="left:17.30px;top:557.10px;font-size:14.1px;font-weight:400;color:#242424;transform:scaleX(0.9125);">4</div>
<div class="t" style="left:16.50px;top:678.90px;font-size:14.1px;font-weight:400;color:#242424;transform:scaleX(1.1000);">5</div>
<div class="t" style="left:16.50px;top:799.80px;font-size:14.1px;font-weight:400;color:#242424;transform:scaleX(1.1000);">6</div>
<div class="t" style="left:16.65px;top:921.80px;font-size:14.1px;font-weight:400;color:#242424;transform:scaleX(1.1500);">7</div>
<div class="t" style="left:21.67px;top:1003.70px;font-size:12.6px;font-weight:400;color:#4a4a4a;transform:scaleX(0.9333);">Slide 1 of 13</div>
<div class="t" style="left:1296.95px;top:1004.00px;font-size:12.8px;font-weight:400;color:#4a4a4a;transform:scaleX(0.9500);">Notes</div>
<div class="t" style="left:1337.97px;top:1004.00px;font-size:12.8px;font-weight:400;color:#4a4a4a;transform:scaleX(0.9323);">Give Feedback to Microsoft</div>
<div class="t" style="left:1821.67px;top:1003.80px;font-size:12.8px;font-weight:400;color:#4a4a4a;transform:scaleX(0.9250);">99%</div>
<div class="t" style="left:1099.07px;top:443.80px;font-size:75px;font-weight:700;color:#000000;transform:scaleX(0.9831);-webkit-text-stroke:1.1px #000;">Basic</div>
<div class="t" style="left:1097.86px;top:519.90px;font-size:75px;font-weight:700;color:#000000;transform:scaleX(1.0090);-webkit-text-stroke:1.1px #000;">presentation</div>

<svg class="ov" style="z-index:9" width="1898" height="1019" viewBox="0 0 1898 1019">
<rect x="1556.5" y="109.4" width="120.2" height="58.4" fill="none" stroke="#0a6ed6" stroke-width="4.6"/>
<line x1="1506" y1="322.5" x2="1548" y2="218" stroke="#0a6ed6" stroke-width="4.2" stroke-linecap="butt"/>
<polygon points="1558.6,192.9 1535.2,215.3 1559.6,225.5" fill="#0a6ed6"/>
</svg>
</body></html>
